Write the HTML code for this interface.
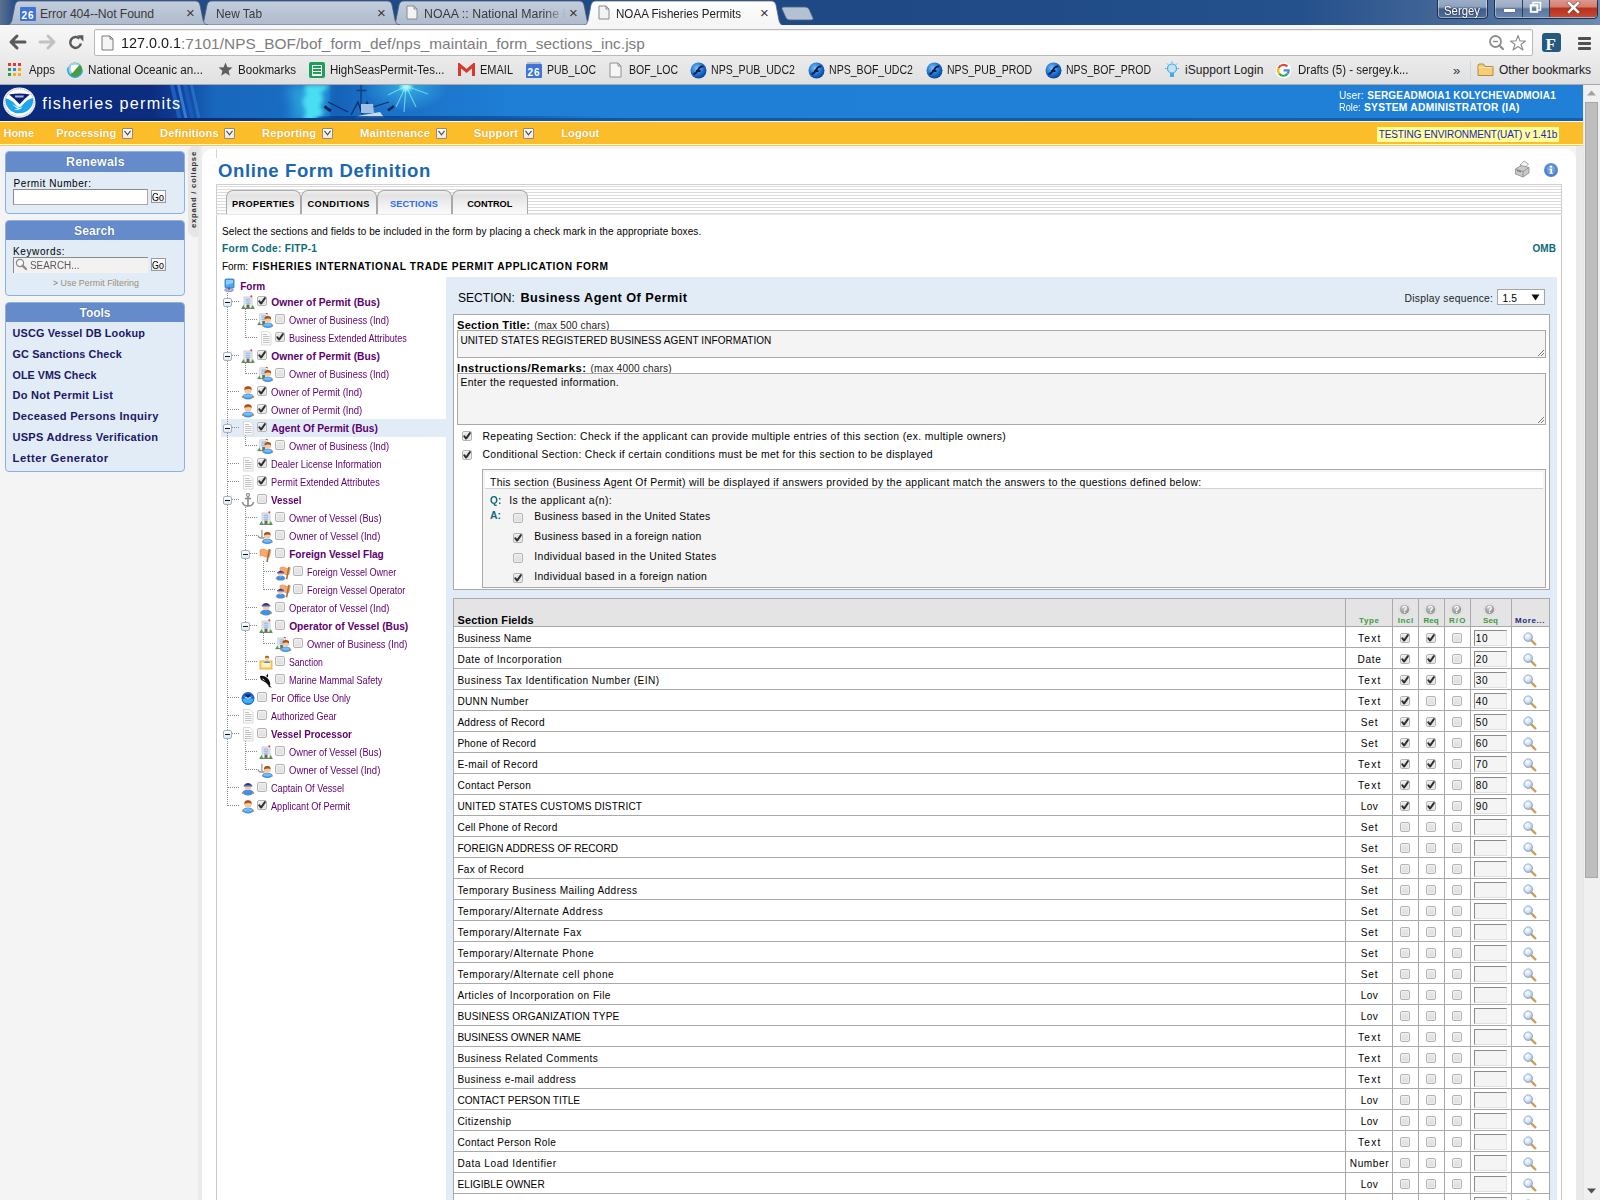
<!DOCTYPE html><html><head><meta charset='utf-8'><style>
html,body{margin:0;padding:0;width:1600px;height:1200px;overflow:hidden;position:relative;background:#f4f4f4;font-family:'Liberation Sans',sans-serif;}
body>div,body>svg{position:absolute;}
</style></head><body><div style="left:0;top:0;width:1600px;height:26px;background:linear-gradient(90deg,#5b718f 0px,#2a5088 14px,#1f4a86 300px,#1e4984 900px,#24508c 1300px,#4a6c9a 1480px,#6d8ab0 1600px);"></div>
<svg style="left:0;top:0" width="1600" height="26" viewBox="0 0 1600 26"><defs><linearGradient id="tg" x1="0" y1="0" x2="0" y2="1"><stop offset="0" stop-color="#c3cedc"/><stop offset="1" stop-color="#aebbcd"/></linearGradient><linearGradient id="ta" x1="0" y1="0" x2="0" y2="1"><stop offset="0" stop-color="#ffffff"/><stop offset="1" stop-color="#f4f4f4"/></linearGradient></defs><path d="M391,25 C394,25 395,23 396,20 L399,5 C400,2 401,1 404,1 L579,1 C582,1 583,2 584,5 L587,20 C588,23 589,25 592,25 Z" fill="url(#tg)" stroke="#4c6182" stroke-width="0.8"/><path d="M199,25 C202,25 203,23 204,20 L207,5 C208,2 209,1 212,1 L387,1 C390,1 391,2 392,5 L395,20 C396,23 397,25 400,25 Z" fill="url(#tg)" stroke="#4c6182" stroke-width="0.8"/><path d="M7,25 C10,25 11,23 12,20 L15,5 C16,2 17,1 20,1 L195,1 C198,1 199,2 200,5 L203,20 C204,23 205,25 208,25 Z" fill="url(#tg)" stroke="#4c6182" stroke-width="0.8"/><path d="M583,25.6 C586,25.6 587,23.6 588,20.6 L591,5 C592,2 593,1 596,1 L771,1 C774,1 775,2 776,5 L779,20.6 C780,23.6 781,25.6 784,25.6 Z" fill="url(#ta)" stroke="none"/><path d="M583,25.6 C586,25.6 587,23.6 588,20.6 L591,5 C592,2 593,1 596,1 L771,1 C774,1 775,2 776,5 L779,20.6 C780,23.6 781,25.6 784,25.6" fill="none" stroke="#5a6d88" stroke-width="0.8"/><path d="M784,7 L805,7 C807,7 808,8 809,9 L813,18 C813.5,19 813,20 811,20 L790,20 C788,20 787,19 786,18 L782,9 C781.5,8 782,7 784,7 Z" fill="#b4c1d2" stroke="#4c6182" stroke-width="0.8"/></svg>
<div style="left:1437px;top:-3px;width:49px;height:20px;border:1px solid #1d2f4a;border-radius:4px;background:linear-gradient(#9fb0c8 0%,#8ea2bf 45%,#3f5e8c 55%,#4d6b97 100%);box-shadow:inset 0 0 0 1px rgba(255,255,255,.45);"></div>
<div style="left:1444.00px;top:4.84px;font-size:12.00px;line-height:12.00px;font-weight:400;color:#ffffff;font-family:'Liberation Sans',sans-serif;white-space:pre;transform:scaleX(0.9467);transform-origin:0 0;text-shadow:0 0 2px #223;">Sergey</div>
<div style="left:1494px;top:-3px;width:102px;height:20px;border:1px solid #1d2f4a;border-radius:4px;overflow:hidden;box-shadow:inset 0 0 0 1px rgba(255,255,255,.4);background:linear-gradient(#aebcd0 0%,#9aaac2 45%,#5a789f 55%,#6a87ad 100%);"></div>
<div style="left:1522px;top:-2px;width:1px;height:19px;background:#2c3e58;"></div>
<div style="left:1549px;top:-2px;width:47px;height:19px;border-left:1px solid #2c3e58;border-radius:0 3px 3px 0;background:linear-gradient(#e0a097 0%,#d47f72 45%,#b8321e 55%,#c9482e 100%);"></div>
<div style="left:1504px;top:9px;width:11px;height:3px;background:#fff;box-shadow:0 0 1px #223;"></div>
<svg style="left:1529px;top:1px" width="13" height="13" viewBox="0 0 13 13"><path d="M4,4 L4,1.5 L11.5,1.5 L11.5,9 L9,9" stroke="#ffffff" stroke-width="1.5" fill="none"/><rect x="1.8" y="4.3" width="6.5" height="6.5" stroke="#ffffff" stroke-width="2" fill="none"/></svg>
<svg style="left:1566px;top:1px" width="15" height="13" viewBox="0 0 15 13"><path d="M3,2 L12,11 M12,2 L3,11" stroke="#5a1a10" stroke-width="4" stroke-linecap="square" opacity=".5"/><path d="M3,2 L12,11 M12,2 L3,11" stroke="#ffffff" stroke-width="2.6" stroke-linecap="square"/></svg>
<div style="left:20px;top:7px;width:16px;height:14px;background:#3f73d6;border-radius:1px;"></div>
<div style="left:20px;top:5px;width:16px;height:2px;background:#b9c4d4;"></div>
<div style="left:21.50px;top:11.14px;font-size:10.00px;line-height:10.00px;font-weight:700;color:#ffffff;font-family:'Liberation Sans',sans-serif;white-space:pre;letter-spacing:0.883px;">26</div>
<div style="left:40.00px;top:8.17px;font-size:12.20px;line-height:12.20px;font-weight:400;color:#3a3a3a;font-family:'Liberation Sans',sans-serif;white-space:pre;letter-spacing:-0.097px;">Error 404--Not Found</div>
<div style="left:186.00px;top:5.30px;font-size:15.00px;line-height:15.00px;font-weight:400;color:#3b3b3b;font-family:'Liberation Sans',sans-serif;white-space:pre;">×</div>
<div style="left:216.00px;top:8.17px;font-size:12.20px;line-height:12.20px;font-weight:400;color:#3a3a3a;font-family:'Liberation Sans',sans-serif;white-space:pre;transform:scaleX(0.9745);transform-origin:0 0;">New Tab</div>
<div style="left:377.00px;top:5.30px;font-size:15.00px;line-height:15.00px;font-weight:400;color:#3b3b3b;font-family:'Liberation Sans',sans-serif;white-space:pre;">×</div>
<svg style="left:406px;top:5px" width="13" height="16"><path d="M1,1 L8,1 L11,4 L11,14 L1,14 Z" fill="#f3f3f3" stroke="#8a8a8a" stroke-width="1"/><path d="M8,1 L8,4 L11,4" fill="none" stroke="#8a8a8a" stroke-width="1"/></svg>
<div style="left:424px;top:3px;width:142px;height:20px;overflow:hidden;-webkit-mask-image:linear-gradient(90deg,#000 85%,transparent 100%);mask-image:linear-gradient(90deg,#000 85%,transparent 100%);"><span style="position:absolute;left:0;top:3.5px;font-size:12.3px;color:#3a3a3a;white-space:pre;letter-spacing:0.05px;">NOAA :: National Marine Fisheries</span></div>
<div style="left:569.00px;top:5.30px;font-size:15.00px;line-height:15.00px;font-weight:400;color:#3b3b3b;font-family:'Liberation Sans',sans-serif;white-space:pre;">×</div>
<svg style="left:598px;top:5px" width="13" height="16"><path d="M1,1 L8,1 L11,4 L11,14 L1,14 Z" fill="#f3f3f3" stroke="#8a8a8a" stroke-width="1"/><path d="M8,1 L8,4 L11,4" fill="none" stroke="#8a8a8a" stroke-width="1"/></svg>
<div style="left:616.00px;top:8.17px;font-size:12.20px;line-height:12.20px;font-weight:400;color:#222222;font-family:'Liberation Sans',sans-serif;white-space:pre;transform:scaleX(0.9514);transform-origin:0 0;">NOAA Fisheries Permits</div>
<div style="left:760.00px;top:5.30px;font-size:15.00px;line-height:15.00px;font-weight:400;color:#3b3b3b;font-family:'Liberation Sans',sans-serif;white-space:pre;">×</div>
<div style="left:0;top:25px;width:1600px;height:60px;background:linear-gradient(#f7f7f7 0px,#f1f1f1 20px,#ebebeb 33px,#e6e6e6 45px,#e0e0e0 59px);"></div>
<div style="left:0;top:84px;width:1600px;height:1px;background:#a9a9a9;"></div>
<svg style="left:8px;top:33px" width="80" height="18" viewBox="0 0 80 18"><path d="M3,9 L17,9 M9,3 L3,9 L9,15" stroke="#5a5a5a" stroke-width="3" fill="none" stroke-linecap="round" stroke-linejoin="round"/><path d="M32,9 L46,9 M40,3 L46,9 L40,15" stroke="#c2c2c2" stroke-width="3" fill="none" stroke-linecap="round" stroke-linejoin="round"/><path d="M71.4,5.6 A5.4,5.4 0 1 0 72.9,10.6" stroke="#5a5a5a" stroke-width="2.5" fill="none"/><path d="M69.2,2.3 L75.4,2.3 L75.4,8.5 Z" fill="#5a5a5a"/></svg>
<div style="left:94px;top:29px;width:1437px;height:25px;background:#fff;border:1px solid #b9b9b9;border-radius:2px;box-shadow:inset 0 1px 1px rgba(0,0,0,.06);"></div>
<svg style="left:101px;top:35px" width="14" height="17"><path d="M1,1 L9,1 L12,4 L12,15 L1,15 Z" fill="#f5f5f5" stroke="#7a7a7a" stroke-width="1"/><path d="M9,1 L9,4 L12,4" fill="none" stroke="#7a7a7a" stroke-width="1"/></svg>
<div style="left:121.00px;top:36.24px;font-size:14.84px;line-height:14.84px;font-weight:400;color:#1a1a1a;font-family:'Liberation Sans',sans-serif;white-space:pre;transform:scaleX(0.9698);transform-origin:0 0;">127.0.0.1</div>
<div style="left:181.00px;top:35.78px;font-size:15.38px;line-height:15.38px;font-weight:400;color:#7d7d7d;font-family:'Liberation Sans',sans-serif;white-space:pre;letter-spacing:0.040px;">:7101/NPS_BOF/bof_form_def/nps_maintain_form_sections_inc.jsp</div>
<svg style="left:1488px;top:34px" width="40" height="18" viewBox="0 0 40 18"><circle cx="7.5" cy="7.5" r="5.5" stroke="#8d8d8d" stroke-width="1.8" fill="none"/><path d="M5,7.5 L10,7.5" stroke="#8d8d8d" stroke-width="1.4"/><path d="M11.5,11.5 L15,15" stroke="#8d8d8d" stroke-width="2.2" stroke-linecap="round"/><path d="M30,1.5 L32,7 L37.5,7 L33,10.5 L35,16 L30,12.5 L25,16 L27,10.5 L22.5,7 L28,7 Z" stroke="#8d8d8d" stroke-width="1.1" fill="#fff" stroke-linejoin="round"/></svg>
<div style="left:1542px;top:33px;width:19px;height:19px;background:#245a80;border-radius:3px;"></div>
<div style="left:1545.50px;top:36.11px;font-size:17.00px;line-height:17.00px;font-weight:700;color:#ffffff;font-family:'Liberation Serif',sans-serif;white-space:pre;">F</div>
<div style="left:1578px;top:37px;width:13px;height:3px;background:#505050;border-radius:1px;"></div>
<div style="left:1578px;top:42px;width:13px;height:3px;background:#505050;border-radius:1px;"></div>
<div style="left:1578px;top:47px;width:13px;height:3px;background:#505050;border-radius:1px;"></div>
<div style="left:8px;top:63px;width:3px;height:3px;background:#e8352f;"></div>
<div style="left:13px;top:63px;width:3px;height:3px;background:#e8352f;"></div>
<div style="left:18px;top:63px;width:3px;height:3px;background:#e8352f;"></div>
<div style="left:8px;top:68px;width:3px;height:3px;background:#2c9d48;"></div>
<div style="left:13px;top:68px;width:3px;height:3px;background:#2f86e6;"></div>
<div style="left:18px;top:68px;width:3px;height:3px;background:#f2a013;"></div>
<div style="left:8px;top:73px;width:3px;height:3px;background:#2c9d48;"></div>
<div style="left:13px;top:73px;width:3px;height:3px;background:#f9b10f;"></div>
<div style="left:18px;top:73px;width:3px;height:3px;background:#f9b10f;"></div>
<div style="left:28.50px;top:64.44px;font-size:12.00px;line-height:12.00px;font-weight:400;color:#1a1a1a;font-family:'Liberation Sans',sans-serif;white-space:pre;transform:scaleX(0.9503);transform-origin:0 0;">Apps</div>
<svg style="left:66px;top:61px" width="18" height="18" viewBox="0 0 18 18"><circle cx="9" cy="9" r="7.5" fill="#4c9b3a"/><path d="M9,1.5 A7.5,7.5 0 0 0 3.6,14.2 L14,3.8 A7.5,7.5 0 0 0 9,1.5 Z" fill="#9fd0ec"/><circle cx="9" cy="9" r="7.2" fill="none" stroke="#2aa3df" stroke-width="1.4" stroke-dasharray="25 30"/><path d="M5,4.5 Q9,3 12.5,4.5 L6.5,12 Q4,9 5,4.5Z" fill="#ffffff"/></svg>
<div style="left:88.00px;top:64.44px;font-size:12.00px;line-height:12.00px;font-weight:400;color:#1a1a1a;font-family:'Liberation Sans',sans-serif;white-space:pre;transform:scaleX(0.9739);transform-origin:0 0;">National Oceanic an...</div>
<svg style="left:218px;top:62px" width="15" height="15" viewBox="0 0 15 15"><path d="M7.5,0.5 L9.4,5.2 L14.5,5.5 L10.6,8.8 L11.8,13.8 L7.5,11 L3.2,13.8 L4.4,8.8 L0.5,5.5 L5.6,5.2 Z" fill="#5f5f5f"/></svg>
<div style="left:238.00px;top:64.44px;font-size:12.00px;line-height:12.00px;font-weight:400;color:#1a1a1a;font-family:'Liberation Sans',sans-serif;white-space:pre;transform:scaleX(0.9662);transform-origin:0 0;">Bookmarks</div>
<div style="left:309px;top:62px;width:16px;height:16px;background:#1e9f57;border-radius:2px;"></div>
<div style="left:312px;top:65px;width:8px;height:9px;border:1px solid #fff;background:repeating-linear-gradient(#1e9f57 0 2px,#fff 2px 3px);"></div>
<div style="left:330.00px;top:64.44px;font-size:12.00px;line-height:12.00px;font-weight:400;color:#1a1a1a;font-family:'Liberation Sans',sans-serif;white-space:pre;transform:scaleX(0.9592);transform-origin:0 0;">HighSeasPermit-Tes...</div>
<svg style="left:458px;top:63px" width="17" height="14" viewBox="0 0 17 14"><path d="M1.5,13 L1.5,2 L8.5,8 L15.5,2 L15.5,13" stroke="#d9392b" stroke-width="3" fill="none" stroke-linejoin="miter"/></svg>
<div style="left:480.00px;top:64.44px;font-size:12.00px;line-height:12.00px;font-weight:400;color:#1a1a1a;font-family:'Liberation Sans',sans-serif;white-space:pre;transform:scaleX(0.9163);transform-origin:0 0;">EMAIL</div>
<div style="left:526px;top:64px;width:16px;height:14px;background:#3f73d6;border-radius:1px;"></div>
<div style="left:527px;top:62px;width:14px;height:2px;background:#b6bfcc;"></div>
<div style="left:527.50px;top:68.13px;font-size:10.00px;line-height:10.00px;font-weight:700;color:#ffffff;font-family:'Liberation Sans',sans-serif;white-space:pre;letter-spacing:0.883px;">26</div>
<div style="left:547.00px;top:64.44px;font-size:12.00px;line-height:12.00px;font-weight:400;color:#1a1a1a;font-family:'Liberation Sans',sans-serif;white-space:pre;transform:scaleX(0.8745);transform-origin:0 0;">PUB_LOC</div>
<svg style="left:609px;top:62px" width="14" height="17"><path d="M1,1 L9,1 L12,4 L12,15 L1,15 Z" fill="#f6f6f6" stroke="#909090" stroke-width="1"/><path d="M9,1 L9,4 L12,4" fill="none" stroke="#909090" stroke-width="1"/></svg>
<div style="left:629.00px;top:64.44px;font-size:12.00px;line-height:12.00px;font-weight:400;color:#1a1a1a;font-family:'Liberation Sans',sans-serif;white-space:pre;transform:scaleX(0.8748);transform-origin:0 0;">BOF_LOC</div>
<svg style="left:690px;top:62px" width="17" height="17" viewBox="0 0 17 17"><defs><radialGradient id="sg690" cx="0.4" cy="0.35" r="0.7"><stop offset="0" stop-color="#7ec3f4"/><stop offset="0.6" stop-color="#1b6fd0"/><stop offset="1" stop-color="#0b3c8c"/></radialGradient></defs><circle cx="8.5" cy="8.5" r="8" fill="url(#sg690)"/><path d="M3.5,12 Q6,12 8,8 Q10,4 13.5,4.5 M6,9 L10.5,9" stroke="#0a1f4a" stroke-width="1.8" fill="none"/></svg>
<div style="left:711.00px;top:64.44px;font-size:12.00px;line-height:12.00px;font-weight:400;color:#1a1a1a;font-family:'Liberation Sans',sans-serif;white-space:pre;transform:scaleX(0.8807);transform-origin:0 0;">NPS_PUB_UDC2</div>
<svg style="left:808px;top:62px" width="17" height="17" viewBox="0 0 17 17"><defs><radialGradient id="sg808" cx="0.4" cy="0.35" r="0.7"><stop offset="0" stop-color="#7ec3f4"/><stop offset="0.6" stop-color="#1b6fd0"/><stop offset="1" stop-color="#0b3c8c"/></radialGradient></defs><circle cx="8.5" cy="8.5" r="8" fill="url(#sg808)"/><path d="M3.5,12 Q6,12 8,8 Q10,4 13.5,4.5 M6,9 L10.5,9" stroke="#0a1f4a" stroke-width="1.8" fill="none"/></svg>
<div style="left:829.00px;top:64.44px;font-size:12.00px;line-height:12.00px;font-weight:400;color:#1a1a1a;font-family:'Liberation Sans',sans-serif;white-space:pre;transform:scaleX(0.8807);transform-origin:0 0;">NPS_BOF_UDC2</div>
<svg style="left:926px;top:62px" width="17" height="17" viewBox="0 0 17 17"><defs><radialGradient id="sg926" cx="0.4" cy="0.35" r="0.7"><stop offset="0" stop-color="#7ec3f4"/><stop offset="0.6" stop-color="#1b6fd0"/><stop offset="1" stop-color="#0b3c8c"/></radialGradient></defs><circle cx="8.5" cy="8.5" r="8" fill="url(#sg926)"/><path d="M3.5,12 Q6,12 8,8 Q10,4 13.5,4.5 M6,9 L10.5,9" stroke="#0a1f4a" stroke-width="1.8" fill="none"/></svg>
<div style="left:947.00px;top:64.44px;font-size:12.00px;line-height:12.00px;font-weight:400;color:#1a1a1a;font-family:'Liberation Sans',sans-serif;white-space:pre;transform:scaleX(0.8729);transform-origin:0 0;">NPS_PUB_PROD</div>
<svg style="left:1045px;top:62px" width="17" height="17" viewBox="0 0 17 17"><defs><radialGradient id="sg1045" cx="0.4" cy="0.35" r="0.7"><stop offset="0" stop-color="#7ec3f4"/><stop offset="0.6" stop-color="#1b6fd0"/><stop offset="1" stop-color="#0b3c8c"/></radialGradient></defs><circle cx="8.5" cy="8.5" r="8" fill="url(#sg1045)"/><path d="M3.5,12 Q6,12 8,8 Q10,4 13.5,4.5 M6,9 L10.5,9" stroke="#0a1f4a" stroke-width="1.8" fill="none"/></svg>
<div style="left:1066.00px;top:64.44px;font-size:12.00px;line-height:12.00px;font-weight:400;color:#1a1a1a;font-family:'Liberation Sans',sans-serif;white-space:pre;transform:scaleX(0.8731);transform-origin:0 0;">NPS_BOF_PROD</div>
<svg style="left:1163px;top:61px" width="18" height="18" viewBox="0 0 18 18"><circle cx="9" cy="7.5" r="4.5" fill="#bfe3f7" stroke="#4aa8df" stroke-width="1.2"/><rect x="7" y="12" width="4" height="4" fill="#4aa8df"/><path d="M9,0.5 L9,2 M2,7.5 L3.5,7.5 M14.5,7.5 L16,7.5 M3.8,2.5 L4.8,3.5 M14.2,2.5 L13.2,3.5" stroke="#4aa8df" stroke-width="1"/></svg>
<div style="left:1185.00px;top:64.44px;font-size:12.00px;line-height:12.00px;font-weight:400;color:#1a1a1a;font-family:'Liberation Sans',sans-serif;white-space:pre;letter-spacing:0.085px;">iSupport Login</div>
<svg style="left:1275px;top:62px" width="17" height="17" viewBox="0 0 17 17"><circle cx="8.5" cy="8.5" r="8" fill="#fff"/><path d="M13.5,7.3 L8.6,7.3 L8.6,9.6 L11.2,9.6 A3.1,3.1 0 1 1 10.4,5.8 L12.1,4.2 A5.4,5.4 0 1 0 13.6,8.5 Z" fill="none" stroke="#4285f4" stroke-width="0"/><path d="M12.3,4.6 A5.2,5.2 0 0 0 3.6,6.2" stroke="#ea4335" stroke-width="2.2" fill="none"/><path d="M3.6,6.2 A5.2,5.2 0 0 0 4.2,11.6" stroke="#fbbc05" stroke-width="2.2" fill="none"/><path d="M4.2,11.6 A5.2,5.2 0 0 0 12.6,11.6" stroke="#34a853" stroke-width="2.2" fill="none"/><path d="M12.6,11.6 A5.2,5.2 0 0 0 13.7,8.4 L8.6,8.4" stroke="#4285f4" stroke-width="2.2" fill="none"/></svg>
<div style="left:1297.50px;top:64.44px;font-size:12.00px;line-height:12.00px;font-weight:400;color:#1a1a1a;font-family:'Liberation Sans',sans-serif;white-space:pre;transform:scaleX(0.9597);transform-origin:0 0;">Drafts (5) - sergey.k...</div>
<div style="left:1453.00px;top:63.50px;font-size:13.00px;line-height:13.00px;font-weight:400;color:#333333;font-family:'Liberation Sans',sans-serif;white-space:pre;">»</div>
<div style="left:1470px;top:61px;width:1px;height:20px;background:#cfd6de;"></div>
<svg style="left:1477px;top:62px" width="17" height="15" viewBox="0 0 17 15"><path d="M1,3 L1,13.5 L16,13.5 L16,4.5 L8,4.5 L6.5,2 L2,2 Z" fill="#f6cd78" stroke="#b58a3a" stroke-width="1"/><path d="M1.5,5.5 L15.5,5.5" stroke="#fbe4ad" stroke-width="1"/></svg>
<div style="left:1499.00px;top:64.44px;font-size:12.00px;line-height:12.00px;font-weight:400;color:#1a1a1a;font-family:'Liberation Sans',sans-serif;white-space:pre;">Other bookmarks</div>
<div style="left:0;top:85px;width:1583px;height:1115px;background:#f4f4f4;"></div>
<div style="left:0;top:85px;width:1583px;height:36px;background:linear-gradient(90deg,#0a2a7c 0px,#0b2c7f 150px,#0e3a90 172px,#1455ab 195px,#1867bd 215px,#196cc2 290px,#1b74ca 420px,#1f7fd6 520px,#2080d8 1583px);"></div>
<svg style="left:150px;top:85px" width="80" height="36" viewBox="0 0 80 36"><path d="M20,0 L24,0 L32,36 L28,36 Z" fill="#1e62c4" opacity=".9"/><path d="M27,0 L30,0 L38,36 L35,36 Z" fill="#3a8ae6" opacity=".8"/><path d="M33,0 L37,0 L45,36 L41,36 Z" fill="#1b5cbe" opacity=".9"/><path d="M40,0 L43,0 L51,36 L48,36 Z" fill="#2f7fdc" opacity=".6"/></svg>
<div style="left:330px;top:85px;width:40px;height:33px;background:linear-gradient(90deg,rgba(16,80,170,.55),rgba(20,90,180,0));"></div>
<svg style="left:270px;top:85px" width="90" height="36" viewBox="0 0 90 36"><defs><filter id="cb" x="-30%" y="-30%" width="160%" height="160%"><feGaussianBlur stdDeviation="2.2"/></filter><filter id="cb2" x="-50%" y="-50%" width="200%" height="200%"><feGaussianBlur stdDeviation="6"/></filter></defs><path d="M20,0 L62,0 Q58,6 54,9 Q60,14 55,19 Q52,24 58,28 Q54,33 50,36 L18,36 Q26,26 22,18 Q16,10 20,0Z" fill="#38c8ee" opacity=".55" filter="url(#cb2)"/><path d="M36,0 L60,0 Q56,5 50,8 Q55,12 52,17 Q47,22 54,27 Q52,31 44,36 L32,36 Q38,28 34,21 Q30,15 37,9 Q32,5 36,0Z" fill="#4ee6f4" opacity=".9" filter="url(#cb)"/></svg>
<div style="left:360px;top:85px;width:100px;height:36px;background:radial-gradient(ellipse 8px 6px at 46px 2px,rgba(230,255,255,1),rgba(120,240,250,.85) 50%,rgba(60,190,240,0) 100%),radial-gradient(ellipse 42px 24px at 46px 2px,rgba(70,210,245,.6),rgba(40,140,220,0) 100%);"></div>
<svg style="left:370px;top:85px" width="80" height="36" viewBox="0 0 80 36"><g stroke="#9af6ff" stroke-width="1.2" opacity=".6"><path d="M36,1 L26,22"/><path d="M36,1 L34,27"/><path d="M36,1 L46,22"/><path d="M36,1 L18,10"/><path d="M36,1 L58,9"/></g></svg>
<svg style="left:318px;top:85px" width="82" height="36" viewBox="0 0 82 36"><path d="M43,0 L43,26 M38.5,5.5 L48.5,5.5" stroke="#123f80" stroke-width="1.5"/><path d="M10,17 L30,27 M52,23 L71,17 M33,30 L40,17 L44,29 M44,29 L49,17 L55,28" stroke="#0b2f68" stroke-width="1.3" fill="none"/><path d="M6.5,21.5 L13,26 M70,25.5 L76,21" stroke="#082450" stroke-width="2.8"/><path d="M43,19 L55,19 L56,28 L43,28 Z" fill="#9fc0e4"/><path d="M33,35 L68,35 L62,27 Q50,29 40,31 Z" fill="#c9ddf2"/><path d="M0,32.5 L82,32.5 L82,35 L0,35 Z" fill="#0f4f9c" opacity=".85"/></svg>
<div style="left:312px;top:116px;width:300px;height:3px;background:linear-gradient(90deg,rgba(10,60,140,0),rgba(10,60,140,.8) 8%,rgba(12,70,150,.7) 60%,rgba(15,90,170,0));"></div>
<div style="left:0;top:118px;width:1583px;height:3px;background:linear-gradient(90deg,#0a2a70 0px,#0a2a70 180px,#0d4f9e 400px,#0f5aa8 700px,#1060b0 1583px);"></div>
<div style="left:0;top:121px;width:1583px;height:1px;background:#fff8e0;"></div>
<div style="left:0;top:122px;width:1583px;height:22px;background:#fbbd2a;"></div>
<div style="left:0;top:144px;width:1583px;height:1px;background:#fffbe8;"></div>
<div style="left:0;top:145px;width:1583px;height:1px;background:#fbc94a;"></div>
<svg style="left:2px;top:87px" width="36" height="33" viewBox="0 0 36 33"><ellipse cx="17.3" cy="15.6" rx="16.2" ry="15.2" fill="#f6f4f8"/><ellipse cx="17.3" cy="15.6" rx="14.7" ry="13.8" fill="none" stroke="#c9bccb" stroke-width="1.1" stroke-dasharray="1.2 0.9"/><ellipse cx="17.3" cy="15.6" rx="13.8" ry="12.9" fill="#ffffff"/><path d="M3.6,11.2 Q10,12.5 15.2,19.6 Q17.2,20.6 19.2,19.4 Q24.5,12.5 31,11 A13.9,13 0 1 1 3.6,11.2 Z" fill="#1ba6ee"/><path d="M7,7.6 Q17.3,5.4 27.8,7.4 Q22.5,11.5 17.6,17.2 Q12.2,11.5 7,7.6 Z" fill="#0b1f78"/><path d="M12.8,8.6 L21.8,8.6 L21.3,10.4 L13.3,10.4 Z" fill="#d0d0ea" opacity=".85"/><path d="M10,17 Q14,21 16,21.5 L12,22.5 Q14,23.3 18,22.3 L20.5,20.2 Q18,21 16.5,20.5 Z" fill="#ffffff" opacity=".9"/></svg>
<div style="left:42.20px;top:94.89px;font-size:16.20px;line-height:16.20px;font-weight:400;color:#ffffff;font-family:'Liberation Sans',sans-serif;white-space:pre;letter-spacing:1.260px;">fisheries permits</div>
<div style="left:3.50px;top:128.30px;font-size:10.99px;line-height:10.99px;font-weight:700;color:#ffffff;font-family:'Liberation Sans',sans-serif;white-space:pre;letter-spacing:-0.010px;text-shadow:0 0 1px rgba(160,100,0,.6);">Home</div>
<div style="left:56.25px;top:128.23px;font-size:11.06px;line-height:11.06px;font-weight:700;color:#ffffff;font-family:'Liberation Sans',sans-serif;white-space:pre;letter-spacing:0.038px;text-shadow:0 0 1px rgba(160,100,0,.6);">Processing</div>
<div style="left:121.5px;top:128px;width:9px;height:9px;border:1px solid #9a8a6a;background:linear-gradient(#ffffff,#e8e8e8);border-radius:1px;"></div>
<svg style="left:123.5px;top:130px" width="8" height="6" viewBox="0 0 8 6"><path d="M0.5,0.8 L3.5,4.8 L6.5,0.8" stroke="#505050" stroke-width="1.2" fill="none"/></svg>
<div style="left:160.00px;top:128.14px;font-size:11.18px;line-height:11.18px;font-weight:700;color:#ffffff;font-family:'Liberation Sans',sans-serif;white-space:pre;letter-spacing:0.094px;text-shadow:0 0 1px rgba(160,100,0,.6);">Definitions</div>
<div style="left:223.5px;top:128px;width:9px;height:9px;border:1px solid #9a8a6a;background:linear-gradient(#ffffff,#e8e8e8);border-radius:1px;"></div>
<svg style="left:225.5px;top:130px" width="8" height="6" viewBox="0 0 8 6"><path d="M0.5,0.8 L3.5,4.8 L6.5,0.8" stroke="#505050" stroke-width="1.2" fill="none"/></svg>
<div style="left:262.00px;top:128.09px;font-size:11.24px;line-height:11.24px;font-weight:700;color:#ffffff;font-family:'Liberation Sans',sans-serif;white-space:pre;letter-spacing:0.142px;text-shadow:0 0 1px rgba(160,100,0,.6);">Reporting</div>
<div style="left:321.5px;top:128px;width:9px;height:9px;border:1px solid #9a8a6a;background:linear-gradient(#ffffff,#e8e8e8);border-radius:1px;"></div>
<svg style="left:323.5px;top:130px" width="8" height="6" viewBox="0 0 8 6"><path d="M0.5,0.8 L3.5,4.8 L6.5,0.8" stroke="#505050" stroke-width="1.2" fill="none"/></svg>
<div style="left:360.00px;top:128.06px;font-size:11.27px;line-height:11.27px;font-weight:700;color:#ffffff;font-family:'Liberation Sans',sans-serif;white-space:pre;letter-spacing:0.170px;text-shadow:0 0 1px rgba(160,100,0,.6);">Maintenance</div>
<div style="left:435.5px;top:128px;width:9px;height:9px;border:1px solid #9a8a6a;background:linear-gradient(#ffffff,#e8e8e8);border-radius:1px;"></div>
<svg style="left:437.5px;top:130px" width="8" height="6" viewBox="0 0 8 6"><path d="M0.5,0.8 L3.5,4.8 L6.5,0.8" stroke="#505050" stroke-width="1.2" fill="none"/></svg>
<div style="left:473.75px;top:128.06px;font-size:11.27px;line-height:11.27px;font-weight:700;color:#ffffff;font-family:'Liberation Sans',sans-serif;white-space:pre;letter-spacing:0.180px;text-shadow:0 0 1px rgba(160,100,0,.6);">Support</div>
<div style="left:522.5px;top:128px;width:9px;height:9px;border:1px solid #9a8a6a;background:linear-gradient(#ffffff,#e8e8e8);border-radius:1px;"></div>
<svg style="left:524.5px;top:130px" width="8" height="6" viewBox="0 0 8 6"><path d="M0.5,0.8 L3.5,4.8 L6.5,0.8" stroke="#505050" stroke-width="1.2" fill="none"/></svg>
<div style="left:561.25px;top:128.20px;font-size:11.11px;line-height:11.11px;font-weight:700;color:#ffffff;font-family:'Liberation Sans',sans-serif;white-space:pre;letter-spacing:0.074px;text-shadow:0 0 1px rgba(160,100,0,.6);">Logout</div>
<div style="left:1339.00px;top:91.42px;font-size:10.02px;line-height:10.02px;font-weight:400;color:#ffffff;font-family:'Liberation Sans',sans-serif;white-space:pre;letter-spacing:0.136px;">User:</div>
<div style="left:1367.30px;top:91.42px;font-size:10.02px;line-height:10.02px;font-weight:700;color:#ffffff;font-family:'Liberation Sans',sans-serif;white-space:pre;letter-spacing:0.156px;">SERGEADMOIA1 KOLYCHEVADMOIA1</div>
<div style="left:1339.00px;top:102.84px;font-size:10.00px;line-height:10.00px;font-weight:400;color:#ffffff;font-family:'Liberation Sans',sans-serif;white-space:pre;transform:scaleX(0.9254);transform-origin:0 0;">Role:</div>
<div style="left:1364.00px;top:102.65px;font-size:10.22px;line-height:10.22px;font-weight:700;color:#ffffff;font-family:'Liberation Sans',sans-serif;white-space:pre;letter-spacing:0.267px;">SYSTEM ADMINISTRATOR (IA)</div>
<div style="left:1377px;top:127px;width:182px;height:15px;background:#ffff9c;"></div>
<div style="left:1378.70px;top:129.94px;font-size:10.00px;line-height:10.00px;font-weight:400;color:#2323b8;font-family:'Liberation Sans',sans-serif;white-space:pre;letter-spacing:-0.095px;">TESTING ENVIRONMENT(UAT) v 1.41b</div>
<div style="left:1583px;top:85px;width:17px;height:1115px;background:#f0f0f0;border-left:1px solid #e6e6e6;box-sizing:border-box;"></div>
<svg style="left:1586px;top:89px" width="11" height="8" viewBox="0 0 11 8"><path d="M1,6.5 L5.5,1.5 L10,6.5 Z" fill="#a3a3a3"/></svg>
<div style="left:1585px;top:102px;width:13px;height:776px;background:#bebebe;border:1px solid #a8a8a8;box-sizing:border-box;"></div>
<svg style="left:1586px;top:1187px" width="11" height="8" viewBox="0 0 11 8"><path d="M1,1.5 L5.5,6.5 L10,1.5 Z" fill="#505050"/></svg>
<div style="left:5px;top:151px;width:180px;height:62.5px;box-sizing:border-box;border:1px solid #8cb0e4;border-radius:4px;background:#e1ecf7;overflow:hidden;"><div style="position:absolute;left:0;top:0;width:178px;height:19.5px;background:#658bcb;"></div></div>
<div style="left:66.05px;top:156.46px;font-size:12.34px;line-height:12.34px;font-weight:700;color:#ffffff;font-family:'Liberation Sans',sans-serif;white-space:pre;letter-spacing:0.227px;text-shadow:0 0 1px #2a4a8a;">Renewals</div>
<div style="left:13.50px;top:179.13px;font-size:10.00px;line-height:10.00px;font-weight:400;color:#000000;font-family:'Liberation Sans',sans-serif;white-space:pre;letter-spacing:0.576px;">Permit Number:</div>
<div style="left:13px;top:189px;width:135px;height:16px;box-sizing:border-box;background:#fff;border:1px solid #a8a8a8;border-top-color:#8a8a8a;border-left-color:#8a8a8a;"></div>
<div style="left:151px;top:190px;width:15px;height:13px;box-sizing:border-box;background:linear-gradient(#ffffff,#ececec);border:1px solid #9a9a9a;"></div>
<div style="left:152.30px;top:192.84px;font-size:10.00px;line-height:10.00px;font-weight:400;color:#000000;font-family:'Liberation Sans',sans-serif;white-space:pre;transform:scaleX(0.8993);transform-origin:0 0;">Go</div>
<div style="left:5px;top:219.5px;width:180px;height:76.5px;box-sizing:border-box;border:1px solid #8cb0e4;border-radius:4px;background:#e1ecf7;overflow:hidden;"><div style="position:absolute;left:0;top:0;width:178px;height:19px;background:#658bcb;"></div></div>
<div style="left:74.05px;top:224.88px;font-size:12.07px;line-height:12.07px;font-weight:700;color:#ffffff;font-family:'Liberation Sans',sans-serif;white-space:pre;letter-spacing:0.047px;text-shadow:0 0 1px #2a4a8a;">Search</div>
<div style="left:13.00px;top:247.44px;font-size:10.00px;line-height:10.00px;font-weight:400;color:#000000;font-family:'Liberation Sans',sans-serif;white-space:pre;letter-spacing:0.614px;">Keywords:</div>
<div style="left:13px;top:257px;width:135px;height:16px;box-sizing:border-box;background:#f2f2f2;border-top:1px solid #8a8a8a;border-left:1px solid #8a8a8a;"></div>
<svg style="left:15px;top:258px" width="13" height="13" viewBox="0 0 13 13"><circle cx="5" cy="5" r="3.6" fill="#f8f8f8" stroke="#8a8a8a" stroke-width="1.2"/><path d="M7.6,7.6 L11,11" stroke="#8a8a8a" stroke-width="2.2" stroke-linecap="round"/></svg>
<div style="left:29.50px;top:260.97px;font-size:10.19px;line-height:10.19px;font-weight:400;color:#5a5a5a;font-family:'Liberation Sans',sans-serif;white-space:pre;transform:scaleX(0.9709);transform-origin:0 0;">SEARCH...</div>
<div style="left:151px;top:258px;width:15px;height:13px;box-sizing:border-box;background:linear-gradient(#ffffff,#ececec);border:1px solid #9a9a9a;"></div>
<div style="left:152.30px;top:260.84px;font-size:10.00px;line-height:10.00px;font-weight:400;color:#000000;font-family:'Liberation Sans',sans-serif;white-space:pre;transform:scaleX(0.8993);transform-origin:0 0;">Go</div>
<div style="left:53.00px;top:279.20px;font-size:8.50px;line-height:8.50px;font-weight:400;color:#7a7a7a;font-family:'Liberation Sans',sans-serif;white-space:pre;">&gt;</div>
<div style="left:60.50px;top:278.89px;font-size:8.87px;line-height:8.87px;font-weight:400;color:#9c8f74;font-family:'Liberation Sans',sans-serif;white-space:pre;letter-spacing:0.033px;">Use Permit Filtering</div>
<div style="left:5px;top:301.5px;width:180px;height:170.0px;box-sizing:border-box;border:1px solid #8cb0e4;border-radius:4px;background:#e1ecf7;overflow:hidden;"><div style="position:absolute;left:0;top:0;width:178px;height:19.5px;background:#658bcb;"></div></div>
<div style="left:79.50px;top:306.86px;font-size:11.98px;line-height:11.98px;font-weight:700;color:#ffffff;font-family:'Liberation Sans',sans-serif;white-space:pre;letter-spacing:-0.014px;text-shadow:0 0 1px #2a4a8a;">Tools</div>
<div style="left:12.50px;top:327.70px;font-size:10.86px;line-height:10.86px;font-weight:700;color:#1c1866;font-family:'Liberation Sans',sans-serif;white-space:pre;letter-spacing:0.160px;">USCG Vessel DB Lookup</div>
<div style="left:12.50px;top:348.59px;font-size:10.85px;line-height:10.85px;font-weight:700;color:#1c1866;font-family:'Liberation Sans',sans-serif;white-space:pre;letter-spacing:0.149px;">GC Sanctions Check</div>
<div style="left:12.50px;top:369.61px;font-size:10.69px;line-height:10.69px;font-weight:700;color:#1c1866;font-family:'Liberation Sans',sans-serif;white-space:pre;letter-spacing:0.062px;">OLE VMS Check</div>
<div style="left:12.50px;top:390.19px;font-size:11.05px;line-height:11.05px;font-weight:700;color:#1c1866;font-family:'Liberation Sans',sans-serif;white-space:pre;letter-spacing:0.240px;">Do Not Permit List</div>
<div style="left:12.50px;top:411.00px;font-size:11.12px;line-height:11.12px;font-weight:700;color:#1c1866;font-family:'Liberation Sans',sans-serif;white-space:pre;letter-spacing:0.299px;">Deceased Persons Inquiry</div>
<div style="left:12.50px;top:431.95px;font-size:11.05px;line-height:11.05px;font-weight:700;color:#1c1866;font-family:'Liberation Sans',sans-serif;white-space:pre;letter-spacing:0.246px;">USPS Address Verification</div>
<div style="left:12.50px;top:452.67px;font-size:11.24px;line-height:11.24px;font-weight:700;color:#1c1866;font-family:'Liberation Sans',sans-serif;white-space:pre;letter-spacing:0.514px;">Letter Generator</div>
<div style="left:198px;top:146px;width:4px;height:1054px;background:#ebebeb;"></div>
<svg style="left:188px;top:146px" width="11" height="91" viewBox="0 0 11 91"><path d="M0,4 L4,0 L11,0 L11,91 L5,91 L0,86 Z" fill="#e6e6e6"/></svg>
<div style="left:188px;top:228px;width:77px;height:11px;transform-origin:0 0;transform:rotate(-90deg);font-size:7.6px;font-weight:700;line-height:11px;color:#333333;white-space:pre;letter-spacing:0.8px;">expand / collapse</div>
<div style="left:1576px;top:146px;width:7px;height:1054px;background:#e9e9e9;"></div>
<div style="left:202px;top:149px;width:1374px;height:1100px;background:#ffffff;border-radius:11px 11px 0 0;"></div>
<div style="left:216px;top:149px;width:1px;height:9px;background:#d4d4d4;"></div>
<div style="left:216px;top:184px;width:1px;height:1016px;background:#c9c9c9;"></div>
<div style="left:1561px;top:184px;width:1px;height:1016px;background:#c9c9c9;"></div>
<div style="left:218.00px;top:161.90px;font-size:18.55px;line-height:18.55px;font-weight:700;color:#1a67b4;font-family:'Liberation Sans',sans-serif;white-space:pre;letter-spacing:0.599px;">Online Form Definition</div>
<svg style="left:1514px;top:160px" width="18" height="18" viewBox="0 0 18 18"><path d="M6,5 L10,1 L14.5,4 L10.5,8 Z" fill="#f4f4f4" stroke="#9a9a9a" stroke-width="0.8"/><path d="M1.5,9 L7,5.5 L15,7.5 L15,13 L9,17 L1.5,14 Z" fill="#c9c9c9" stroke="#8c8c8c" stroke-width="0.8"/><path d="M1.5,9 L9,11.5 L15,7.5" fill="none" stroke="#8c8c8c" stroke-width="0.8"/><path d="M9,11.5 L9,17" stroke="#8c8c8c" stroke-width="0.8"/><path d="M3,10.5 L7,11.8" stroke="#6a6a6a" stroke-width="1"/></svg>
<svg style="left:1542.5px;top:162px" width="16" height="16" viewBox="0 0 16 16"><defs><radialGradient id="ig" cx=".5" cy=".4" r=".6"><stop offset="0" stop-color="#8fb6e8"/><stop offset="1" stop-color="#4a7fcf"/></radialGradient></defs><circle cx="8" cy="8" r="7" fill="url(#ig)"/><circle cx="8" cy="8" r="5.2" fill="none" stroke="#3a68b0" stroke-width="0.8" opacity=".7"/><circle cx="8" cy="4.6" r="1.2" fill="#fff"/><path d="M6.6,6.8 L9,6.8 L9,10.8 L10,10.8 L10,11.8 L6.4,11.8 L6.4,10.8 L7.4,10.8 L7.4,7.8 L6.6,7.8 Z" fill="#fff"/></svg>
<div style="left:216px;top:184px;width:1346px;height:31px;box-sizing:border-box;border:1px solid #cfcfcf;border-bottom:none;background:repeating-linear-gradient(#ffffff 0px,#ffffff 1px,#dcdcdc 1px,#dcdcdc 2px,#ffffff 2px,#ffffff 3px);"></div>
<div style="left:226px;top:190px;width:74.5px;height:25px;box-sizing:border-box;border:1px solid #a9a9a9;border-bottom:none;border-radius:7px 7px 0 0;background:linear-gradient(#f2f2f2 0px,#e2e2e2 4px,#f0f0f0 14px,#fbfbfb 24px);"></div>
<div style="left:232.00px;top:199.81px;font-size:9.20px;line-height:9.20px;font-weight:700;color:#000000;font-family:'Liberation Sans',sans-serif;white-space:pre;letter-spacing:0.363px;">PROPERTIES</div>
<div style="left:300.5px;top:190px;width:76.0px;height:25px;box-sizing:border-box;border:1px solid #a9a9a9;border-bottom:none;border-radius:7px 7px 0 0;background:linear-gradient(#f2f2f2 0px,#e2e2e2 4px,#f0f0f0 14px,#fbfbfb 24px);"></div>
<div style="left:307.50px;top:199.81px;font-size:9.20px;line-height:9.20px;font-weight:700;color:#000000;font-family:'Liberation Sans',sans-serif;white-space:pre;letter-spacing:0.479px;">CONDITIONS</div>
<div style="left:376.5px;top:190px;width:75.0px;height:25px;box-sizing:border-box;border:1px solid #a9a9a9;border-bottom:none;border-radius:7px 7px 0 0;background:linear-gradient(#f2f2f2 0px,#e2e2e2 4px,#f0f0f0 14px,#fbfbfb 24px);"></div>
<div style="left:390.00px;top:199.81px;font-size:9.20px;line-height:9.20px;font-weight:700;color:#2e6ce8;font-family:'Liberation Sans',sans-serif;white-space:pre;letter-spacing:0.147px;">SECTIONS</div>
<div style="left:451.5px;top:190px;width:76.5px;height:25px;box-sizing:border-box;border:1px solid #a9a9a9;border-bottom:none;border-radius:7px 7px 0 0;background:linear-gradient(#f2f2f2 0px,#e2e2e2 4px,#f0f0f0 14px,#fbfbfb 24px);"></div>
<div style="left:467.25px;top:199.81px;font-size:9.20px;line-height:9.20px;font-weight:700;color:#000000;font-family:'Liberation Sans',sans-serif;white-space:pre;letter-spacing:-0.070px;">CONTROL</div>
<div style="left:216px;top:214px;width:1346px;height:1px;background:#e8e8e8;"></div>
<div style="left:222.00px;top:226.94px;font-size:10.00px;line-height:10.00px;font-weight:400;color:#000000;font-family:'Liberation Sans',sans-serif;white-space:pre;letter-spacing:0.111px;">Select the sections and fields to be included in the form by placing a check mark in the appropriate boxes.</div>
<div style="left:222.00px;top:243.85px;font-size:10.10px;line-height:10.10px;font-weight:700;color:#0e6a78;font-family:'Liberation Sans',sans-serif;white-space:pre;letter-spacing:0.294px;">Form Code: FITP-1</div>
<div style="left:1532.50px;top:243.94px;font-size:10.00px;line-height:10.00px;font-weight:700;color:#0e6a78;font-family:'Liberation Sans',sans-serif;white-space:pre;letter-spacing:0.088px;">OMB</div>
<div style="left:222.00px;top:261.84px;font-size:10.00px;line-height:10.00px;font-weight:400;color:#000000;font-family:'Liberation Sans',sans-serif;white-space:pre;letter-spacing:-0.027px;">Form:</div>
<div style="left:252.50px;top:261.69px;font-size:10.18px;line-height:10.18px;font-weight:700;color:#000000;font-family:'Liberation Sans',sans-serif;white-space:pre;letter-spacing:0.662px;">FISHERIES INTERNATIONAL TRADE PERMIT APPLICATION FORM</div>
<div style="left:221px;top:419px;width:225px;height:18px;background:#e1ecf7;"></div>
<svg style="left:222px;top:278px" width="14" height="15" viewBox="0 0 14 15"><rect x="3" y="1" width="9" height="9" rx="1" fill="#4aa8f0" stroke="#2a6fb8" stroke-width=".8"/><path d="M4,2 L11,2 L11,5 L4,7 Z" fill="#9fd8ff" opacity=".8"/><ellipse cx="7" cy="12" rx="4.5" ry="1.6" fill="#b8b8d8" stroke="#7070a8" stroke-width=".6"/><rect x="6" y="9.5" width="2" height="2" fill="#5a5a9a"/></svg>
<div style="left:240.20px;top:281.84px;font-size:10.00px;line-height:10.00px;font-weight:700;color:#5e006e;font-family:'Liberation Sans',sans-serif;white-space:pre;">Form</div>
<div style="left:227px;top:293px;width:1px;height:513px;background:repeating-linear-gradient(#8a8a8a 0 1px,transparent 1px 2px);"></div>
<div style="left:245px;top:309px;width:1px;height:29px;background:repeating-linear-gradient(#8a8a8a 0 1px,transparent 1px 2px);"></div>
<div style="left:245px;top:363px;width:1px;height:11px;background:repeating-linear-gradient(#8a8a8a 0 1px,transparent 1px 2px);"></div>
<div style="left:245px;top:435px;width:1px;height:11px;background:repeating-linear-gradient(#8a8a8a 0 1px,transparent 1px 2px);"></div>
<div style="left:245px;top:507px;width:1px;height:173px;background:repeating-linear-gradient(#8a8a8a 0 1px,transparent 1px 2px);"></div>
<div style="left:263px;top:561px;width:1px;height:29px;background:repeating-linear-gradient(#8a8a8a 0 1px,transparent 1px 2px);"></div>
<div style="left:263px;top:633px;width:1px;height:11px;background:repeating-linear-gradient(#8a8a8a 0 1px,transparent 1px 2px);"></div>
<div style="left:245px;top:741px;width:1px;height:29px;background:repeating-linear-gradient(#8a8a8a 0 1px,transparent 1px 2px);"></div>
<div style="left:223.0px;top:297.5px;width:9px;height:9px;box-sizing:border-box;border:1px solid #9fb3cc;border-radius:2px;background:linear-gradient(#ffffff,#dfe7f0);"></div>
<div style="left:225.0px;top:301.5px;width:5px;height:1.4px;background:#111;"></div>
<div style="left:232px;top:301px;width:7px;height:1px;background:repeating-linear-gradient(90deg,#8a8a8a 0 1px,transparent 1px 2px);"></div>
<svg style="left:241px;top:295.0px" width="14" height="15" viewBox="0 0 14 15"><rect x="3" y="2" width="8" height="11" fill="#f0f0f0" stroke="#b0b0b0" stroke-width=".6"/><rect x="4.5" y="3.5" width="5" height="1.3" fill="#8fb8ec"/><rect x="4.5" y="5.5" width="5" height="1.3" fill="#8fb8ec"/><rect x="4.5" y="7.5" width="5" height="1.3" fill="#8fb8ec"/><rect x="5.5" y="9.5" width="3" height="3.5" fill="#6a6a6a"/><path d="M0.5,13.3 L2.5,10 L4,13.3 Z M10,13.3 L11.8,10 L13.5,13.3 Z" fill="#3fae3f"/><circle cx="10.3" cy="1.2" r="1" fill="#e23a3a"/><rect x="0.5" y="13" width="13" height="0.8" fill="#5a6a5a"/></svg>
<div style="left:257px;top:296.2px;width:10px;height:10px;box-sizing:border-box;border:1px solid #b3b3b3;border-radius:2px;background:linear-gradient(#e9e9e9,#dedede);box-shadow:inset 0 0 0 0.5px #fafafa;"></div>
<svg style="left:257px;top:296.2px" width="10" height="10" viewBox="0 0 10 10"><path d="M2.2,5.2 L4.1,7.6 L7.9,2.1" stroke="#2e2e2e" stroke-width="1.9" fill="none" stroke-linecap="round" stroke-linejoin="round"/></svg>
<div style="left:271.20px;top:298.12px;font-size:10.25px;line-height:10.25px;font-weight:700;color:#5e006e;font-family:'Liberation Sans',sans-serif;white-space:pre;letter-spacing:0.029px;">Owner of Permit (Bus)</div>
<div style="left:246px;top:319px;width:11px;height:1px;background:repeating-linear-gradient(90deg,#8a8a8a 0 1px,transparent 1px 2px);"></div>
<svg style="left:257px;top:313.0px" width="18" height="16" viewBox="0 0 18 16"><g transform="translate(0,-1) scale(.95)"><rect x="3" y="2" width="8" height="11" fill="#f0f0f0" stroke="#b0b0b0" stroke-width=".6"/><rect x="4.5" y="3.5" width="5" height="1.3" fill="#8fb8ec"/><rect x="4.5" y="5.5" width="5" height="1.3" fill="#8fb8ec"/><rect x="4.5" y="7.5" width="5" height="1.3" fill="#8fb8ec"/><rect x="5.5" y="9.5" width="3" height="3.5" fill="#6a6a6a"/><path d="M0.5,13.3 L2.5,10 L4,13.3 Z M10,13.3 L11.8,10 L13.5,13.3 Z" fill="#3fae3f"/><circle cx="10.3" cy="1.2" r="1" fill="#e23a3a"/><rect x="0.5" y="13" width="13" height="0.8" fill="#5a6a5a"/></g><g transform="translate(4.5,2) scale(.9)"><ellipse cx="7" cy="11.5" rx="5.5" ry="3" fill="#3d8ff0"/><path d="M3,10 Q7,8.5 11,10 L11,12 Q7,13.5 3,12 Z" fill="#6ac0ff"/><circle cx="7" cy="5.2" r="3.6" fill="#f6caa0"/><path d="M3.3,5 Q3,1 7,1.2 Q11,1 10.7,5 Q8,2.8 3.3,5Z" fill="#a8541a"/><circle cx="1.8" cy="12" r="1" fill="#f08a1a"/><circle cx="12.2" cy="12" r="1" fill="#f08a1a"/></g></svg>
<div style="left:275px;top:314.2px;width:10px;height:10px;box-sizing:border-box;border:1px solid #b3b3b3;border-radius:2px;background:linear-gradient(#e9e9e9,#dedede);box-shadow:inset 0 0 0 0.5px #fafafa;"></div>
<div style="left:289.20px;top:316.34px;font-size:10.00px;line-height:10.00px;font-weight:400;color:#5e006e;font-family:'Liberation Sans',sans-serif;white-space:pre;transform:scaleX(0.9323);transform-origin:0 0;">Owner of Business (Ind)</div>
<div style="left:246px;top:337px;width:11px;height:1px;background:repeating-linear-gradient(90deg,#8a8a8a 0 1px,transparent 1px 2px);"></div>
<svg style="left:259px;top:331.0px" width="14" height="15" viewBox="0 0 14 15"><path d="M2.5,0.5 L9,0.5 L12,3.5 L12,14 L2.5,14 Z" fill="#fbfbfb" stroke="#d0d0d0" stroke-width=".8"/><path d="M4,3.5 L8,3.5 M4,5.5 L10.5,5.5 M4,7.5 L10.5,7.5 M4,9.5 L10.5,9.5 M4,11.5 L10.5,11.5" stroke="#a8a8a8" stroke-width=".7"/></svg>
<div style="left:275px;top:332.2px;width:10px;height:10px;box-sizing:border-box;border:1px solid #b3b3b3;border-radius:2px;background:linear-gradient(#e9e9e9,#dedede);box-shadow:inset 0 0 0 0.5px #fafafa;"></div>
<svg style="left:275px;top:332.2px" width="10" height="10" viewBox="0 0 10 10"><path d="M2.2,5.2 L4.1,7.6 L7.9,2.1" stroke="#2e2e2e" stroke-width="1.9" fill="none" stroke-linecap="round" stroke-linejoin="round"/></svg>
<div style="left:289.20px;top:334.34px;font-size:10.00px;line-height:10.00px;font-weight:400;color:#5e006e;font-family:'Liberation Sans',sans-serif;white-space:pre;transform:scaleX(0.9056);transform-origin:0 0;">Business Extended Attributes</div>
<div style="left:223.0px;top:351.5px;width:9px;height:9px;box-sizing:border-box;border:1px solid #9fb3cc;border-radius:2px;background:linear-gradient(#ffffff,#dfe7f0);"></div>
<div style="left:225.0px;top:355.5px;width:5px;height:1.4px;background:#111;"></div>
<div style="left:232px;top:355px;width:7px;height:1px;background:repeating-linear-gradient(90deg,#8a8a8a 0 1px,transparent 1px 2px);"></div>
<svg style="left:241px;top:349.0px" width="14" height="15" viewBox="0 0 14 15"><rect x="3" y="2" width="8" height="11" fill="#f0f0f0" stroke="#b0b0b0" stroke-width=".6"/><rect x="4.5" y="3.5" width="5" height="1.3" fill="#8fb8ec"/><rect x="4.5" y="5.5" width="5" height="1.3" fill="#8fb8ec"/><rect x="4.5" y="7.5" width="5" height="1.3" fill="#8fb8ec"/><rect x="5.5" y="9.5" width="3" height="3.5" fill="#6a6a6a"/><path d="M0.5,13.3 L2.5,10 L4,13.3 Z M10,13.3 L11.8,10 L13.5,13.3 Z" fill="#3fae3f"/><circle cx="10.3" cy="1.2" r="1" fill="#e23a3a"/><rect x="0.5" y="13" width="13" height="0.8" fill="#5a6a5a"/></svg>
<div style="left:257px;top:350.2px;width:10px;height:10px;box-sizing:border-box;border:1px solid #b3b3b3;border-radius:2px;background:linear-gradient(#e9e9e9,#dedede);box-shadow:inset 0 0 0 0.5px #fafafa;"></div>
<svg style="left:257px;top:350.2px" width="10" height="10" viewBox="0 0 10 10"><path d="M2.2,5.2 L4.1,7.6 L7.9,2.1" stroke="#2e2e2e" stroke-width="1.9" fill="none" stroke-linecap="round" stroke-linejoin="round"/></svg>
<div style="left:271.20px;top:352.12px;font-size:10.25px;line-height:10.25px;font-weight:700;color:#5e006e;font-family:'Liberation Sans',sans-serif;white-space:pre;letter-spacing:0.029px;">Owner of Permit (Bus)</div>
<div style="left:246px;top:373px;width:11px;height:1px;background:repeating-linear-gradient(90deg,#8a8a8a 0 1px,transparent 1px 2px);"></div>
<svg style="left:257px;top:367.0px" width="18" height="16" viewBox="0 0 18 16"><g transform="translate(0,-1) scale(.95)"><rect x="3" y="2" width="8" height="11" fill="#f0f0f0" stroke="#b0b0b0" stroke-width=".6"/><rect x="4.5" y="3.5" width="5" height="1.3" fill="#8fb8ec"/><rect x="4.5" y="5.5" width="5" height="1.3" fill="#8fb8ec"/><rect x="4.5" y="7.5" width="5" height="1.3" fill="#8fb8ec"/><rect x="5.5" y="9.5" width="3" height="3.5" fill="#6a6a6a"/><path d="M0.5,13.3 L2.5,10 L4,13.3 Z M10,13.3 L11.8,10 L13.5,13.3 Z" fill="#3fae3f"/><circle cx="10.3" cy="1.2" r="1" fill="#e23a3a"/><rect x="0.5" y="13" width="13" height="0.8" fill="#5a6a5a"/></g><g transform="translate(4.5,2) scale(.9)"><ellipse cx="7" cy="11.5" rx="5.5" ry="3" fill="#3d8ff0"/><path d="M3,10 Q7,8.5 11,10 L11,12 Q7,13.5 3,12 Z" fill="#6ac0ff"/><circle cx="7" cy="5.2" r="3.6" fill="#f6caa0"/><path d="M3.3,5 Q3,1 7,1.2 Q11,1 10.7,5 Q8,2.8 3.3,5Z" fill="#a8541a"/><circle cx="1.8" cy="12" r="1" fill="#f08a1a"/><circle cx="12.2" cy="12" r="1" fill="#f08a1a"/></g></svg>
<div style="left:275px;top:368.2px;width:10px;height:10px;box-sizing:border-box;border:1px solid #b3b3b3;border-radius:2px;background:linear-gradient(#e9e9e9,#dedede);box-shadow:inset 0 0 0 0.5px #fafafa;"></div>
<div style="left:289.20px;top:370.34px;font-size:10.00px;line-height:10.00px;font-weight:400;color:#5e006e;font-family:'Liberation Sans',sans-serif;white-space:pre;transform:scaleX(0.9323);transform-origin:0 0;">Owner of Business (Ind)</div>
<div style="left:228px;top:391px;width:11px;height:1px;background:repeating-linear-gradient(90deg,#8a8a8a 0 1px,transparent 1px 2px);"></div>
<svg style="left:241px;top:385.0px" width="14" height="15" viewBox="0 0 14 15"><ellipse cx="7" cy="11.5" rx="5.5" ry="3" fill="#3d8ff0"/><path d="M3,10 Q7,8.5 11,10 L11,12 Q7,13.5 3,12 Z" fill="#6ac0ff"/><circle cx="7" cy="5.2" r="3.6" fill="#f6caa0"/><path d="M3.3,5 Q3,1 7,1.2 Q11,1 10.7,5 Q8,2.8 3.3,5Z" fill="#a8541a"/><circle cx="1.8" cy="12" r="1" fill="#f08a1a"/><circle cx="12.2" cy="12" r="1" fill="#f08a1a"/></svg>
<div style="left:257px;top:386.2px;width:10px;height:10px;box-sizing:border-box;border:1px solid #b3b3b3;border-radius:2px;background:linear-gradient(#e9e9e9,#dedede);box-shadow:inset 0 0 0 0.5px #fafafa;"></div>
<svg style="left:257px;top:386.2px" width="10" height="10" viewBox="0 0 10 10"><path d="M2.2,5.2 L4.1,7.6 L7.9,2.1" stroke="#2e2e2e" stroke-width="1.9" fill="none" stroke-linecap="round" stroke-linejoin="round"/></svg>
<div style="left:271.20px;top:388.34px;font-size:10.00px;line-height:10.00px;font-weight:400;color:#5e006e;font-family:'Liberation Sans',sans-serif;white-space:pre;transform:scaleX(0.9551);transform-origin:0 0;">Owner of Permit (Ind)</div>
<div style="left:228px;top:409px;width:11px;height:1px;background:repeating-linear-gradient(90deg,#8a8a8a 0 1px,transparent 1px 2px);"></div>
<svg style="left:241px;top:403.0px" width="14" height="15" viewBox="0 0 14 15"><ellipse cx="7" cy="11.5" rx="5.5" ry="3" fill="#3d8ff0"/><path d="M3,10 Q7,8.5 11,10 L11,12 Q7,13.5 3,12 Z" fill="#6ac0ff"/><circle cx="7" cy="5.2" r="3.6" fill="#f6caa0"/><path d="M3.3,5 Q3,1 7,1.2 Q11,1 10.7,5 Q8,2.8 3.3,5Z" fill="#a8541a"/><circle cx="1.8" cy="12" r="1" fill="#f08a1a"/><circle cx="12.2" cy="12" r="1" fill="#f08a1a"/></svg>
<div style="left:257px;top:404.2px;width:10px;height:10px;box-sizing:border-box;border:1px solid #b3b3b3;border-radius:2px;background:linear-gradient(#e9e9e9,#dedede);box-shadow:inset 0 0 0 0.5px #fafafa;"></div>
<svg style="left:257px;top:404.2px" width="10" height="10" viewBox="0 0 10 10"><path d="M2.2,5.2 L4.1,7.6 L7.9,2.1" stroke="#2e2e2e" stroke-width="1.9" fill="none" stroke-linecap="round" stroke-linejoin="round"/></svg>
<div style="left:271.20px;top:406.34px;font-size:10.00px;line-height:10.00px;font-weight:400;color:#5e006e;font-family:'Liberation Sans',sans-serif;white-space:pre;transform:scaleX(0.9551);transform-origin:0 0;">Owner of Permit (Ind)</div>
<div style="left:223.0px;top:423.5px;width:9px;height:9px;box-sizing:border-box;border:1px solid #9fb3cc;border-radius:2px;background:linear-gradient(#ffffff,#dfe7f0);"></div>
<div style="left:225.0px;top:427.5px;width:5px;height:1.4px;background:#111;"></div>
<div style="left:232px;top:427px;width:7px;height:1px;background:repeating-linear-gradient(90deg,#8a8a8a 0 1px,transparent 1px 2px);"></div>
<svg style="left:241px;top:421.0px" width="14" height="15" viewBox="0 0 14 15"><path d="M2.5,0.5 L9,0.5 L12,3.5 L12,14 L2.5,14 Z" fill="#fbfbfb" stroke="#d0d0d0" stroke-width=".8"/><path d="M4,3.5 L8,3.5 M4,5.5 L10.5,5.5 M4,7.5 L10.5,7.5 M4,9.5 L10.5,9.5 M4,11.5 L10.5,11.5" stroke="#a8a8a8" stroke-width=".7"/></svg>
<div style="left:257px;top:422.2px;width:10px;height:10px;box-sizing:border-box;border:1px solid #b3b3b3;border-radius:2px;background:linear-gradient(#e9e9e9,#dedede);box-shadow:inset 0 0 0 0.5px #fafafa;"></div>
<svg style="left:257px;top:422.2px" width="10" height="10" viewBox="0 0 10 10"><path d="M2.2,5.2 L4.1,7.6 L7.9,2.1" stroke="#2e2e2e" stroke-width="1.9" fill="none" stroke-linecap="round" stroke-linejoin="round"/></svg>
<div style="left:271.20px;top:424.15px;font-size:10.21px;line-height:10.21px;font-weight:700;color:#5e006e;font-family:'Liberation Sans',sans-serif;white-space:pre;letter-spacing:0.007px;">Agent Of Permit (Bus)</div>
<div style="left:246px;top:445px;width:11px;height:1px;background:repeating-linear-gradient(90deg,#8a8a8a 0 1px,transparent 1px 2px);"></div>
<svg style="left:257px;top:439.0px" width="18" height="16" viewBox="0 0 18 16"><g transform="translate(0,-1) scale(.95)"><rect x="3" y="2" width="8" height="11" fill="#f0f0f0" stroke="#b0b0b0" stroke-width=".6"/><rect x="4.5" y="3.5" width="5" height="1.3" fill="#8fb8ec"/><rect x="4.5" y="5.5" width="5" height="1.3" fill="#8fb8ec"/><rect x="4.5" y="7.5" width="5" height="1.3" fill="#8fb8ec"/><rect x="5.5" y="9.5" width="3" height="3.5" fill="#6a6a6a"/><path d="M0.5,13.3 L2.5,10 L4,13.3 Z M10,13.3 L11.8,10 L13.5,13.3 Z" fill="#3fae3f"/><circle cx="10.3" cy="1.2" r="1" fill="#e23a3a"/><rect x="0.5" y="13" width="13" height="0.8" fill="#5a6a5a"/></g><g transform="translate(4.5,2) scale(.9)"><ellipse cx="7" cy="11.5" rx="5.5" ry="3" fill="#3d8ff0"/><path d="M3,10 Q7,8.5 11,10 L11,12 Q7,13.5 3,12 Z" fill="#6ac0ff"/><circle cx="7" cy="5.2" r="3.6" fill="#f6caa0"/><path d="M3.3,5 Q3,1 7,1.2 Q11,1 10.7,5 Q8,2.8 3.3,5Z" fill="#a8541a"/><circle cx="1.8" cy="12" r="1" fill="#f08a1a"/><circle cx="12.2" cy="12" r="1" fill="#f08a1a"/></g></svg>
<div style="left:275px;top:440.2px;width:10px;height:10px;box-sizing:border-box;border:1px solid #b3b3b3;border-radius:2px;background:linear-gradient(#e9e9e9,#dedede);box-shadow:inset 0 0 0 0.5px #fafafa;"></div>
<div style="left:289.20px;top:442.34px;font-size:10.00px;line-height:10.00px;font-weight:400;color:#5e006e;font-family:'Liberation Sans',sans-serif;white-space:pre;transform:scaleX(0.9323);transform-origin:0 0;">Owner of Business (Ind)</div>
<div style="left:228px;top:463px;width:11px;height:1px;background:repeating-linear-gradient(90deg,#8a8a8a 0 1px,transparent 1px 2px);"></div>
<svg style="left:241px;top:457.0px" width="14" height="15" viewBox="0 0 14 15"><path d="M2.5,0.5 L9,0.5 L12,3.5 L12,14 L2.5,14 Z" fill="#fbfbfb" stroke="#d0d0d0" stroke-width=".8"/><path d="M4,3.5 L8,3.5 M4,5.5 L10.5,5.5 M4,7.5 L10.5,7.5 M4,9.5 L10.5,9.5 M4,11.5 L10.5,11.5" stroke="#a8a8a8" stroke-width=".7"/></svg>
<div style="left:257px;top:458.2px;width:10px;height:10px;box-sizing:border-box;border:1px solid #b3b3b3;border-radius:2px;background:linear-gradient(#e9e9e9,#dedede);box-shadow:inset 0 0 0 0.5px #fafafa;"></div>
<svg style="left:257px;top:458.2px" width="10" height="10" viewBox="0 0 10 10"><path d="M2.2,5.2 L4.1,7.6 L7.9,2.1" stroke="#2e2e2e" stroke-width="1.9" fill="none" stroke-linecap="round" stroke-linejoin="round"/></svg>
<div style="left:271.20px;top:460.34px;font-size:10.00px;line-height:10.00px;font-weight:400;color:#5e006e;font-family:'Liberation Sans',sans-serif;white-space:pre;transform:scaleX(0.9246);transform-origin:0 0;">Dealer License Information</div>
<div style="left:228px;top:481px;width:11px;height:1px;background:repeating-linear-gradient(90deg,#8a8a8a 0 1px,transparent 1px 2px);"></div>
<svg style="left:241px;top:475.0px" width="14" height="15" viewBox="0 0 14 15"><path d="M2.5,0.5 L9,0.5 L12,3.5 L12,14 L2.5,14 Z" fill="#fbfbfb" stroke="#d0d0d0" stroke-width=".8"/><path d="M4,3.5 L8,3.5 M4,5.5 L10.5,5.5 M4,7.5 L10.5,7.5 M4,9.5 L10.5,9.5 M4,11.5 L10.5,11.5" stroke="#a8a8a8" stroke-width=".7"/></svg>
<div style="left:257px;top:476.2px;width:10px;height:10px;box-sizing:border-box;border:1px solid #b3b3b3;border-radius:2px;background:linear-gradient(#e9e9e9,#dedede);box-shadow:inset 0 0 0 0.5px #fafafa;"></div>
<svg style="left:257px;top:476.2px" width="10" height="10" viewBox="0 0 10 10"><path d="M2.2,5.2 L4.1,7.6 L7.9,2.1" stroke="#2e2e2e" stroke-width="1.9" fill="none" stroke-linecap="round" stroke-linejoin="round"/></svg>
<div style="left:271.20px;top:478.34px;font-size:10.00px;line-height:10.00px;font-weight:400;color:#5e006e;font-family:'Liberation Sans',sans-serif;white-space:pre;transform:scaleX(0.9189);transform-origin:0 0;">Permit Extended Attributes</div>
<div style="left:223.0px;top:495.5px;width:9px;height:9px;box-sizing:border-box;border:1px solid #9fb3cc;border-radius:2px;background:linear-gradient(#ffffff,#dfe7f0);"></div>
<div style="left:225.0px;top:499.5px;width:5px;height:1.4px;background:#111;"></div>
<div style="left:232px;top:499px;width:7px;height:1px;background:repeating-linear-gradient(90deg,#8a8a8a 0 1px,transparent 1px 2px);"></div>
<svg style="left:241px;top:493.0px" width="14" height="15" viewBox="0 0 14 15"><circle cx="7" cy="2" r="1.5" fill="none" stroke="#8a8a8a" stroke-width="1.2"/><path d="M7,3.5 L7,13 M4,5.5 L10,5.5 M1.5,9 Q2,13 7,13 Q12,13 12.5,9" stroke="#8a8a8a" stroke-width="1.6" fill="none"/></svg>
<div style="left:257px;top:494.2px;width:10px;height:10px;box-sizing:border-box;border:1px solid #b3b3b3;border-radius:2px;background:linear-gradient(#e9e9e9,#dedede);box-shadow:inset 0 0 0 0.5px #fafafa;"></div>
<div style="left:271.20px;top:496.34px;font-size:10.00px;line-height:10.00px;font-weight:700;color:#5e006e;font-family:'Liberation Sans',sans-serif;white-space:pre;transform:scaleX(0.9803);transform-origin:0 0;">Vessel</div>
<div style="left:246px;top:517px;width:11px;height:1px;background:repeating-linear-gradient(90deg,#8a8a8a 0 1px,transparent 1px 2px);"></div>
<svg style="left:259px;top:511.0px" width="14" height="15" viewBox="0 0 14 15"><rect x="3" y="2" width="8" height="11" fill="#f0f0f0" stroke="#b0b0b0" stroke-width=".6"/><rect x="4.5" y="3.5" width="5" height="1.3" fill="#8fb8ec"/><rect x="4.5" y="5.5" width="5" height="1.3" fill="#8fb8ec"/><rect x="4.5" y="7.5" width="5" height="1.3" fill="#8fb8ec"/><rect x="5.5" y="9.5" width="3" height="3.5" fill="#6a6a6a"/><path d="M0.5,13.3 L2.5,10 L4,13.3 Z M10,13.3 L11.8,10 L13.5,13.3 Z" fill="#3fae3f"/><circle cx="10.3" cy="1.2" r="1" fill="#e23a3a"/><rect x="0.5" y="13" width="13" height="0.8" fill="#5a6a5a"/></svg>
<div style="left:275px;top:512.2px;width:10px;height:10px;box-sizing:border-box;border:1px solid #b3b3b3;border-radius:2px;background:linear-gradient(#e9e9e9,#dedede);box-shadow:inset 0 0 0 0.5px #fafafa;"></div>
<div style="left:289.20px;top:514.33px;font-size:10.00px;line-height:10.00px;font-weight:400;color:#5e006e;font-family:'Liberation Sans',sans-serif;white-space:pre;transform:scaleX(0.9298);transform-origin:0 0;">Owner of Vessel (Bus)</div>
<div style="left:246px;top:535px;width:11px;height:1px;background:repeating-linear-gradient(90deg,#8a8a8a 0 1px,transparent 1px 2px);"></div>
<svg style="left:257px;top:529.0px" width="18" height="16" viewBox="0 0 18 16"><g transform="translate(0,0) scale(.7)"><path d="M7,1 L7,13 M1.5,9 Q2,13 7,13 Q12,13 12.5,9" stroke="#9a9a9a" stroke-width="1.8" fill="none"/></g><g transform="translate(4,2) scale(.9)"><ellipse cx="7" cy="11.5" rx="5.5" ry="3" fill="#3d8ff0"/><path d="M3,10 Q7,8.5 11,10 L11,12 Q7,13.5 3,12 Z" fill="#6ac0ff"/><circle cx="7" cy="5.2" r="3.6" fill="#f6caa0"/><path d="M3.3,5 Q3,1 7,1.2 Q11,1 10.7,5 Q8,2.8 3.3,5Z" fill="#a8541a"/><circle cx="1.8" cy="12" r="1" fill="#f08a1a"/><circle cx="12.2" cy="12" r="1" fill="#f08a1a"/></g></svg>
<div style="left:275px;top:530.2px;width:10px;height:10px;box-sizing:border-box;border:1px solid #b3b3b3;border-radius:2px;background:linear-gradient(#e9e9e9,#dedede);box-shadow:inset 0 0 0 0.5px #fafafa;"></div>
<div style="left:289.20px;top:532.33px;font-size:10.00px;line-height:10.00px;font-weight:400;color:#5e006e;font-family:'Liberation Sans',sans-serif;white-space:pre;transform:scaleX(0.9495);transform-origin:0 0;">Owner of Vessel (Ind)</div>
<div style="left:241.0px;top:549.5px;width:9px;height:9px;box-sizing:border-box;border:1px solid #9fb3cc;border-radius:2px;background:linear-gradient(#ffffff,#dfe7f0);"></div>
<div style="left:243.0px;top:553.5px;width:5px;height:1.4px;background:#111;"></div>
<div style="left:250px;top:553px;width:7px;height:1px;background:repeating-linear-gradient(90deg,#8a8a8a 0 1px,transparent 1px 2px);"></div>
<svg style="left:259px;top:547.0px" width="14" height="15" viewBox="0 0 14 15"><path d="M1,3 Q4,1 7,3 Q10,4.5 12,3 L10.5,10 Q8,11 5.5,9.5 Q3,8.5 1,9 Z" fill="#f8a868" stroke="#e08040" stroke-width=".5"/><path d="M10.5,2 L8,15" stroke="#a0703a" stroke-width="1.6"/></svg>
<div style="left:275px;top:548.2px;width:10px;height:10px;box-sizing:border-box;border:1px solid #b3b3b3;border-radius:2px;background:linear-gradient(#e9e9e9,#dedede);box-shadow:inset 0 0 0 0.5px #fafafa;"></div>
<div style="left:289.20px;top:550.21px;font-size:10.14px;line-height:10.14px;font-weight:700;color:#5e006e;font-family:'Liberation Sans',sans-serif;white-space:pre;letter-spacing:-0.030px;">Foreign Vessel Flag</div>
<div style="left:264px;top:571px;width:11px;height:1px;background:repeating-linear-gradient(90deg,#8a8a8a 0 1px,transparent 1px 2px);"></div>
<svg style="left:275px;top:565.0px" width="18" height="16" viewBox="0 0 18 16"><g transform="translate(4,0) scale(.95)"><path d="M1,3 Q4,1 7,3 Q10,4.5 12,3 L10.5,10 Q8,11 5.5,9.5 Q3,8.5 1,9 Z" fill="#f8a868" stroke="#e08040" stroke-width=".5"/><path d="M10.5,2 L8,15" stroke="#a0703a" stroke-width="1.6"/></g><g transform="translate(0,4) scale(.8)"><ellipse cx="7" cy="11.5" rx="5.5" ry="3" fill="#3d8ff0"/><circle cx="7" cy="6" r="3.3" fill="#f6caa0"/><path d="M2.8,4.2 Q7,0 11.2,4.2 L11.2,5.2 L2.8,5.2 Z" fill="#2a3a8a"/><rect x="2.8" y="4.5" width="8.4" height="1" fill="#7a8ad0"/><circle cx="1.8" cy="12" r="1" fill="#f08a1a"/><circle cx="12.2" cy="12" r="1" fill="#f08a1a"/></g></svg>
<div style="left:293px;top:566.2px;width:10px;height:10px;box-sizing:border-box;border:1px solid #b3b3b3;border-radius:2px;background:linear-gradient(#e9e9e9,#dedede);box-shadow:inset 0 0 0 0.5px #fafafa;"></div>
<div style="left:307.20px;top:568.33px;font-size:10.00px;line-height:10.00px;font-weight:400;color:#5e006e;font-family:'Liberation Sans',sans-serif;white-space:pre;transform:scaleX(0.9066);transform-origin:0 0;">Foreign Vessel Owner</div>
<div style="left:264px;top:589px;width:11px;height:1px;background:repeating-linear-gradient(90deg,#8a8a8a 0 1px,transparent 1px 2px);"></div>
<svg style="left:275px;top:583.0px" width="18" height="16" viewBox="0 0 18 16"><g transform="translate(4,0) scale(.95)"><path d="M1,3 Q4,1 7,3 Q10,4.5 12,3 L10.5,10 Q8,11 5.5,9.5 Q3,8.5 1,9 Z" fill="#f8a868" stroke="#e08040" stroke-width=".5"/><path d="M10.5,2 L8,15" stroke="#a0703a" stroke-width="1.6"/></g><g transform="translate(0,4) scale(.8)"><ellipse cx="7" cy="11.5" rx="5.5" ry="3" fill="#3d8ff0"/><circle cx="7" cy="6" r="3.3" fill="#f6caa0"/><path d="M2.8,4.2 Q7,0 11.2,4.2 L11.2,5.2 L2.8,5.2 Z" fill="#2a3a8a"/><rect x="2.8" y="4.5" width="8.4" height="1" fill="#7a8ad0"/><circle cx="1.8" cy="12" r="1" fill="#f08a1a"/><circle cx="12.2" cy="12" r="1" fill="#f08a1a"/></g></svg>
<div style="left:293px;top:584.2px;width:10px;height:10px;box-sizing:border-box;border:1px solid #b3b3b3;border-radius:2px;background:linear-gradient(#e9e9e9,#dedede);box-shadow:inset 0 0 0 0.5px #fafafa;"></div>
<div style="left:307.20px;top:586.33px;font-size:10.00px;line-height:10.00px;font-weight:400;color:#5e006e;font-family:'Liberation Sans',sans-serif;white-space:pre;transform:scaleX(0.9069);transform-origin:0 0;">Foreign Vessel Operator</div>
<div style="left:246px;top:607px;width:11px;height:1px;background:repeating-linear-gradient(90deg,#8a8a8a 0 1px,transparent 1px 2px);"></div>
<svg style="left:259px;top:601.0px" width="14" height="15" viewBox="0 0 14 15"><ellipse cx="7" cy="11.5" rx="5.5" ry="3" fill="#3d8ff0"/><circle cx="7" cy="6" r="3.3" fill="#f6caa0"/><path d="M2.8,4.2 Q7,0 11.2,4.2 L11.2,5.2 L2.8,5.2 Z" fill="#2a3a8a"/><rect x="2.8" y="4.5" width="8.4" height="1" fill="#7a8ad0"/><circle cx="1.8" cy="12" r="1" fill="#f08a1a"/><circle cx="12.2" cy="12" r="1" fill="#f08a1a"/></svg>
<div style="left:275px;top:602.2px;width:10px;height:10px;box-sizing:border-box;border:1px solid #b3b3b3;border-radius:2px;background:linear-gradient(#e9e9e9,#dedede);box-shadow:inset 0 0 0 0.5px #fafafa;"></div>
<div style="left:289.20px;top:604.33px;font-size:10.00px;line-height:10.00px;font-weight:400;color:#5e006e;font-family:'Liberation Sans',sans-serif;white-space:pre;transform:scaleX(0.9447);transform-origin:0 0;">Operator of Vessel (Ind)</div>
<div style="left:241.0px;top:621.5px;width:9px;height:9px;box-sizing:border-box;border:1px solid #9fb3cc;border-radius:2px;background:linear-gradient(#ffffff,#dfe7f0);"></div>
<div style="left:243.0px;top:625.5px;width:5px;height:1.4px;background:#111;"></div>
<div style="left:250px;top:625px;width:7px;height:1px;background:repeating-linear-gradient(90deg,#8a8a8a 0 1px,transparent 1px 2px);"></div>
<svg style="left:259px;top:619.0px" width="14" height="15" viewBox="0 0 14 15"><rect x="3" y="2" width="8" height="11" fill="#f0f0f0" stroke="#b0b0b0" stroke-width=".6"/><rect x="4.5" y="3.5" width="5" height="1.3" fill="#8fb8ec"/><rect x="4.5" y="5.5" width="5" height="1.3" fill="#8fb8ec"/><rect x="4.5" y="7.5" width="5" height="1.3" fill="#8fb8ec"/><rect x="5.5" y="9.5" width="3" height="3.5" fill="#6a6a6a"/><path d="M0.5,13.3 L2.5,10 L4,13.3 Z M10,13.3 L11.8,10 L13.5,13.3 Z" fill="#3fae3f"/><circle cx="10.3" cy="1.2" r="1" fill="#e23a3a"/><rect x="0.5" y="13" width="13" height="0.8" fill="#5a6a5a"/></svg>
<div style="left:275px;top:620.2px;width:10px;height:10px;box-sizing:border-box;border:1px solid #b3b3b3;border-radius:2px;background:linear-gradient(#e9e9e9,#dedede);box-shadow:inset 0 0 0 0.5px #fafafa;"></div>
<div style="left:289.20px;top:622.16px;font-size:10.21px;line-height:10.21px;font-weight:700;color:#5e006e;font-family:'Liberation Sans',sans-serif;white-space:pre;">Operator of Vessel (Bus)</div>
<div style="left:264px;top:643px;width:11px;height:1px;background:repeating-linear-gradient(90deg,#8a8a8a 0 1px,transparent 1px 2px);"></div>
<svg style="left:275px;top:637.0px" width="18" height="16" viewBox="0 0 18 16"><g transform="translate(0,-1) scale(.95)"><rect x="3" y="2" width="8" height="11" fill="#f0f0f0" stroke="#b0b0b0" stroke-width=".6"/><rect x="4.5" y="3.5" width="5" height="1.3" fill="#8fb8ec"/><rect x="4.5" y="5.5" width="5" height="1.3" fill="#8fb8ec"/><rect x="4.5" y="7.5" width="5" height="1.3" fill="#8fb8ec"/><rect x="5.5" y="9.5" width="3" height="3.5" fill="#6a6a6a"/><path d="M0.5,13.3 L2.5,10 L4,13.3 Z M10,13.3 L11.8,10 L13.5,13.3 Z" fill="#3fae3f"/><circle cx="10.3" cy="1.2" r="1" fill="#e23a3a"/><rect x="0.5" y="13" width="13" height="0.8" fill="#5a6a5a"/></g><g transform="translate(4.5,2) scale(.9)"><ellipse cx="7" cy="11.5" rx="5.5" ry="3" fill="#3d8ff0"/><path d="M3,10 Q7,8.5 11,10 L11,12 Q7,13.5 3,12 Z" fill="#6ac0ff"/><circle cx="7" cy="5.2" r="3.6" fill="#f6caa0"/><path d="M3.3,5 Q3,1 7,1.2 Q11,1 10.7,5 Q8,2.8 3.3,5Z" fill="#a8541a"/><circle cx="1.8" cy="12" r="1" fill="#f08a1a"/><circle cx="12.2" cy="12" r="1" fill="#f08a1a"/></g></svg>
<div style="left:293px;top:638.2px;width:10px;height:10px;box-sizing:border-box;border:1px solid #b3b3b3;border-radius:2px;background:linear-gradient(#e9e9e9,#dedede);box-shadow:inset 0 0 0 0.5px #fafafa;"></div>
<div style="left:307.20px;top:640.33px;font-size:10.00px;line-height:10.00px;font-weight:400;color:#5e006e;font-family:'Liberation Sans',sans-serif;white-space:pre;transform:scaleX(0.9351);transform-origin:0 0;">Owner of Business (Ind)</div>
<div style="left:246px;top:661px;width:11px;height:1px;background:repeating-linear-gradient(90deg,#8a8a8a 0 1px,transparent 1px 2px);"></div>
<svg style="left:259px;top:655.0px" width="14" height="15" viewBox="0 0 14 15"><rect x="1" y="6" width="12" height="8" fill="#f8d870" stroke="#e0a030" stroke-width=".8"/><rect x="2.5" y="8" width="9" height="4" fill="#fff4c0"/><circle cx="8" cy="3" r="2.2" fill="#f6caa0"/><path d="M5.8,3 Q6,0.5 8,0.7 Q10,0.5 10.2,3 Q8,1.8 5.8,3Z" fill="#a8541a"/><path d="M4.5,8 Q8,4.5 11.5,8 Z" fill="#3d8ff0"/></svg>
<div style="left:275px;top:656.2px;width:10px;height:10px;box-sizing:border-box;border:1px solid #b3b3b3;border-radius:2px;background:linear-gradient(#e9e9e9,#dedede);box-shadow:inset 0 0 0 0.5px #fafafa;"></div>
<div style="left:289.20px;top:658.33px;font-size:10.00px;line-height:10.00px;font-weight:400;color:#5e006e;font-family:'Liberation Sans',sans-serif;white-space:pre;transform:scaleX(0.8684);transform-origin:0 0;">Sanction</div>
<div style="left:246px;top:679px;width:11px;height:1px;background:repeating-linear-gradient(90deg,#8a8a8a 0 1px,transparent 1px 2px);"></div>
<svg style="left:259px;top:673.0px" width="14" height="15" viewBox="0 0 14 15"><path d="M1,3 Q6,2 10,7 Q12,10 11,14 L9,12 Q7,9 4,8 Q1,7 1,3Z" fill="#111"/><path d="M3,5 Q5,6 6,8 Q4,7.5 3,5Z" fill="#fff"/><path d="M7,3 L9,0.5 L9,4.5Z" fill="#111"/><path d="M10,12 L13,14.5 L9.5,14Z" fill="#222"/></svg>
<div style="left:275px;top:674.2px;width:10px;height:10px;box-sizing:border-box;border:1px solid #b3b3b3;border-radius:2px;background:linear-gradient(#e9e9e9,#dedede);box-shadow:inset 0 0 0 0.5px #fafafa;"></div>
<div style="left:289.20px;top:676.33px;font-size:10.00px;line-height:10.00px;font-weight:400;color:#5e006e;font-family:'Liberation Sans',sans-serif;white-space:pre;transform:scaleX(0.9075);transform-origin:0 0;">Marine Mammal Safety</div>
<div style="left:228px;top:697px;width:11px;height:1px;background:repeating-linear-gradient(90deg,#8a8a8a 0 1px,transparent 1px 2px);"></div>
<svg style="left:241px;top:691.0px" width="14" height="15" viewBox="0 0 14 15"><circle cx="7" cy="7.5" r="6.5" fill="#1c5fd0"/><path d="M1.5,8 Q7,6 12.5,8 A5.6,5.6 0 0 1 1.5,8Z" fill="#3fb0f0"/><path d="M2.5,5 Q7,10 11.5,5 Q7,8 2.5,5Z" fill="#ffffff"/><path d="M4,3.5 L10,3.5 L7,7 Z" fill="#0a2070"/></svg>
<div style="left:257px;top:692.2px;width:10px;height:10px;box-sizing:border-box;border:1px solid #b3b3b3;border-radius:2px;background:linear-gradient(#e9e9e9,#dedede);box-shadow:inset 0 0 0 0.5px #fafafa;"></div>
<div style="left:271.20px;top:694.33px;font-size:10.00px;line-height:10.00px;font-weight:400;color:#5e006e;font-family:'Liberation Sans',sans-serif;white-space:pre;transform:scaleX(0.9084);transform-origin:0 0;">For Office Use Only</div>
<div style="left:228px;top:715px;width:11px;height:1px;background:repeating-linear-gradient(90deg,#8a8a8a 0 1px,transparent 1px 2px);"></div>
<svg style="left:241px;top:709.0px" width="14" height="15" viewBox="0 0 14 15"><path d="M2.5,0.5 L9,0.5 L12,3.5 L12,14 L2.5,14 Z" fill="#fbfbfb" stroke="#d0d0d0" stroke-width=".8"/><path d="M4,3.5 L8,3.5 M4,5.5 L10.5,5.5 M4,7.5 L10.5,7.5 M4,9.5 L10.5,9.5 M4,11.5 L10.5,11.5" stroke="#a8a8a8" stroke-width=".7"/></svg>
<div style="left:257px;top:710.2px;width:10px;height:10px;box-sizing:border-box;border:1px solid #b3b3b3;border-radius:2px;background:linear-gradient(#e9e9e9,#dedede);box-shadow:inset 0 0 0 0.5px #fafafa;"></div>
<div style="left:271.20px;top:712.33px;font-size:10.00px;line-height:10.00px;font-weight:400;color:#5e006e;font-family:'Liberation Sans',sans-serif;white-space:pre;transform:scaleX(0.8994);transform-origin:0 0;">Authorized Gear</div>
<div style="left:223.0px;top:729.5px;width:9px;height:9px;box-sizing:border-box;border:1px solid #9fb3cc;border-radius:2px;background:linear-gradient(#ffffff,#dfe7f0);"></div>
<div style="left:225.0px;top:733.5px;width:5px;height:1.4px;background:#111;"></div>
<div style="left:232px;top:733px;width:7px;height:1px;background:repeating-linear-gradient(90deg,#8a8a8a 0 1px,transparent 1px 2px);"></div>
<svg style="left:241px;top:727.0px" width="14" height="15" viewBox="0 0 14 15"><path d="M2.5,0.5 L9,0.5 L12,3.5 L12,14 L2.5,14 Z" fill="#fbfbfb" stroke="#d0d0d0" stroke-width=".8"/><path d="M4,3.5 L8,3.5 M4,5.5 L10.5,5.5 M4,7.5 L10.5,7.5 M4,9.5 L10.5,9.5 M4,11.5 L10.5,11.5" stroke="#a8a8a8" stroke-width=".7"/></svg>
<div style="left:257px;top:728.2px;width:10px;height:10px;box-sizing:border-box;border:1px solid #b3b3b3;border-radius:2px;background:linear-gradient(#e9e9e9,#dedede);box-shadow:inset 0 0 0 0.5px #fafafa;"></div>
<div style="left:271.20px;top:730.33px;font-size:10.00px;line-height:10.00px;font-weight:700;color:#5e006e;font-family:'Liberation Sans',sans-serif;white-space:pre;transform:scaleX(0.9766);transform-origin:0 0;">Vessel Processor</div>
<div style="left:246px;top:751px;width:11px;height:1px;background:repeating-linear-gradient(90deg,#8a8a8a 0 1px,transparent 1px 2px);"></div>
<svg style="left:259px;top:745.0px" width="14" height="15" viewBox="0 0 14 15"><rect x="3" y="2" width="8" height="11" fill="#f0f0f0" stroke="#b0b0b0" stroke-width=".6"/><rect x="4.5" y="3.5" width="5" height="1.3" fill="#8fb8ec"/><rect x="4.5" y="5.5" width="5" height="1.3" fill="#8fb8ec"/><rect x="4.5" y="7.5" width="5" height="1.3" fill="#8fb8ec"/><rect x="5.5" y="9.5" width="3" height="3.5" fill="#6a6a6a"/><path d="M0.5,13.3 L2.5,10 L4,13.3 Z M10,13.3 L11.8,10 L13.5,13.3 Z" fill="#3fae3f"/><circle cx="10.3" cy="1.2" r="1" fill="#e23a3a"/><rect x="0.5" y="13" width="13" height="0.8" fill="#5a6a5a"/></svg>
<div style="left:275px;top:746.2px;width:10px;height:10px;box-sizing:border-box;border:1px solid #b3b3b3;border-radius:2px;background:linear-gradient(#e9e9e9,#dedede);box-shadow:inset 0 0 0 0.5px #fafafa;"></div>
<div style="left:289.20px;top:748.33px;font-size:10.00px;line-height:10.00px;font-weight:400;color:#5e006e;font-family:'Liberation Sans',sans-serif;white-space:pre;transform:scaleX(0.9298);transform-origin:0 0;">Owner of Vessel (Bus)</div>
<div style="left:246px;top:769px;width:11px;height:1px;background:repeating-linear-gradient(90deg,#8a8a8a 0 1px,transparent 1px 2px);"></div>
<svg style="left:257px;top:763.0px" width="18" height="16" viewBox="0 0 18 16"><g transform="translate(0,0) scale(.7)"><path d="M7,1 L7,13 M1.5,9 Q2,13 7,13 Q12,13 12.5,9" stroke="#9a9a9a" stroke-width="1.8" fill="none"/></g><g transform="translate(4,2) scale(.9)"><ellipse cx="7" cy="11.5" rx="5.5" ry="3" fill="#3d8ff0"/><path d="M3,10 Q7,8.5 11,10 L11,12 Q7,13.5 3,12 Z" fill="#6ac0ff"/><circle cx="7" cy="5.2" r="3.6" fill="#f6caa0"/><path d="M3.3,5 Q3,1 7,1.2 Q11,1 10.7,5 Q8,2.8 3.3,5Z" fill="#a8541a"/><circle cx="1.8" cy="12" r="1" fill="#f08a1a"/><circle cx="12.2" cy="12" r="1" fill="#f08a1a"/></g></svg>
<div style="left:275px;top:764.2px;width:10px;height:10px;box-sizing:border-box;border:1px solid #b3b3b3;border-radius:2px;background:linear-gradient(#e9e9e9,#dedede);box-shadow:inset 0 0 0 0.5px #fafafa;"></div>
<div style="left:289.20px;top:766.33px;font-size:10.00px;line-height:10.00px;font-weight:400;color:#5e006e;font-family:'Liberation Sans',sans-serif;white-space:pre;transform:scaleX(0.9495);transform-origin:0 0;">Owner of Vessel (Ind)</div>
<div style="left:228px;top:787px;width:11px;height:1px;background:repeating-linear-gradient(90deg,#8a8a8a 0 1px,transparent 1px 2px);"></div>
<svg style="left:241px;top:781.0px" width="14" height="15" viewBox="0 0 14 15"><ellipse cx="7" cy="11.5" rx="5.5" ry="3" fill="#3d8ff0"/><circle cx="7" cy="6" r="3.3" fill="#f6caa0"/><path d="M2.8,4.2 Q7,0 11.2,4.2 L11.2,5.2 L2.8,5.2 Z" fill="#2a3a8a"/><rect x="2.8" y="4.5" width="8.4" height="1" fill="#7a8ad0"/><circle cx="1.8" cy="12" r="1" fill="#f08a1a"/><circle cx="12.2" cy="12" r="1" fill="#f08a1a"/></svg>
<div style="left:257px;top:782.2px;width:10px;height:10px;box-sizing:border-box;border:1px solid #b3b3b3;border-radius:2px;background:linear-gradient(#e9e9e9,#dedede);box-shadow:inset 0 0 0 0.5px #fafafa;"></div>
<div style="left:271.20px;top:784.33px;font-size:10.00px;line-height:10.00px;font-weight:400;color:#5e006e;font-family:'Liberation Sans',sans-serif;white-space:pre;transform:scaleX(0.9120);transform-origin:0 0;">Captain Of Vessel</div>
<div style="left:228px;top:805px;width:11px;height:1px;background:repeating-linear-gradient(90deg,#8a8a8a 0 1px,transparent 1px 2px);"></div>
<svg style="left:241px;top:799.0px" width="14" height="15" viewBox="0 0 14 15"><ellipse cx="7" cy="11.5" rx="5.5" ry="3" fill="#3d8ff0"/><path d="M3,10 Q7,8.5 11,10 L11,12 Q7,13.5 3,12 Z" fill="#6ac0ff"/><circle cx="7" cy="5.2" r="3.6" fill="#f6caa0"/><path d="M3.3,5 Q3,1 7,1.2 Q11,1 10.7,5 Q8,2.8 3.3,5Z" fill="#a8541a"/><circle cx="1.8" cy="12" r="1" fill="#f08a1a"/><circle cx="12.2" cy="12" r="1" fill="#f08a1a"/></svg>
<div style="left:257px;top:800.2px;width:10px;height:10px;box-sizing:border-box;border:1px solid #b3b3b3;border-radius:2px;background:linear-gradient(#e9e9e9,#dedede);box-shadow:inset 0 0 0 0.5px #fafafa;"></div>
<svg style="left:257px;top:800.2px" width="10" height="10" viewBox="0 0 10 10"><path d="M2.2,5.2 L4.1,7.6 L7.9,2.1" stroke="#2e2e2e" stroke-width="1.9" fill="none" stroke-linecap="round" stroke-linejoin="round"/></svg>
<div style="left:271.20px;top:802.33px;font-size:10.00px;line-height:10.00px;font-weight:400;color:#5e006e;font-family:'Liberation Sans',sans-serif;white-space:pre;transform:scaleX(0.9181);transform-origin:0 0;">Applicant Of Permit</div>
<div style="left:446px;top:277px;width:1111px;height:923px;background:#e1ecf7;"></div>
<div style="left:458.00px;top:292.31px;font-size:12.03px;line-height:12.03px;font-weight:400;color:#000000;font-family:'Liberation Sans',sans-serif;white-space:pre;letter-spacing:0.023px;">SECTION:</div>
<div style="left:520.50px;top:291.73px;font-size:12.72px;line-height:12.72px;font-weight:700;color:#000000;font-family:'Liberation Sans',sans-serif;white-space:pre;letter-spacing:0.437px;">Business Agent Of Permit</div>
<div style="left:1404.50px;top:293.58px;font-size:10.30px;line-height:10.30px;font-weight:400;color:#222222;font-family:'Liberation Sans',sans-serif;white-space:pre;letter-spacing:0.270px;">Display sequence:</div>
<div style="left:1497px;top:289px;width:48px;height:16px;box-sizing:border-box;background:#ffffff;border:1px solid #a5a5a5;"></div>
<div style="left:1502.50px;top:293.66px;font-size:10.21px;line-height:10.21px;font-weight:400;color:#000000;font-family:'Liberation Sans',sans-serif;white-space:pre;letter-spacing:0.150px;">1.5</div>
<svg style="left:1531px;top:294px" width="9" height="7" viewBox="0 0 9 7"><path d="M0.5,0.5 L8.5,0.5 L4.5,6.5 Z" fill="#111"/></svg>
<div style="left:453px;top:314px;width:1097px;height:276px;box-sizing:border-box;background:#ffffff;border:1px solid #a9a9a9;"></div>
<div style="left:457.00px;top:319.89px;font-size:11.12px;line-height:11.12px;font-weight:700;color:#000000;font-family:'Liberation Sans',sans-serif;white-space:pre;letter-spacing:0.263px;">Section Title:</div>
<div style="left:534.25px;top:320.75px;font-size:10.10px;line-height:10.10px;font-weight:400;color:#222222;font-family:'Liberation Sans',sans-serif;white-space:pre;letter-spacing:0.162px;">(max 500 chars)</div>
<div style="left:457px;top:330px;width:1089px;height:28px;box-sizing:border-box;background:#f4f4f4;border:1px solid #a9a9a9;"></div>
<svg style="left:1536px;top:348px" width="9" height="9" viewBox="0 0 9 9"><path d="M8,2 L2,8 M8,5 L5,8" stroke="#6a6a6a" stroke-width="0.9"/></svg>
<div style="left:460.50px;top:335.53px;font-size:10.00px;line-height:10.00px;font-weight:400;color:#000000;font-family:'Liberation Sans',sans-serif;white-space:pre;letter-spacing:0.075px;">UNITED STATES REGISTERED BUSINESS AGENT INFORMATION</div>
<div style="left:457.00px;top:362.79px;font-size:11.24px;line-height:11.24px;font-weight:700;color:#000000;font-family:'Liberation Sans',sans-serif;white-space:pre;letter-spacing:0.521px;">Instructions/Remarks:</div>
<div style="left:590.50px;top:363.74px;font-size:10.12px;line-height:10.12px;font-weight:400;color:#222222;font-family:'Liberation Sans',sans-serif;white-space:pre;letter-spacing:0.170px;">(max 4000 chars)</div>
<div style="left:457px;top:373px;width:1089px;height:52px;box-sizing:border-box;background:#f4f4f4;border:1px solid #a9a9a9;"></div>
<svg style="left:1536px;top:415px" width="9" height="9" viewBox="0 0 9 9"><path d="M8,2 L2,8 M8,5 L5,8" stroke="#6a6a6a" stroke-width="0.9"/></svg>
<div style="left:460.50px;top:378.01px;font-size:10.39px;line-height:10.39px;font-weight:400;color:#000000;font-family:'Liberation Sans',sans-serif;white-space:pre;letter-spacing:0.319px;">Enter the requested information.</div>
<div style="left:462px;top:431px;width:10px;height:10px;box-sizing:border-box;border:1px solid #b3b3b3;border-radius:2px;background:linear-gradient(#e9e9e9,#dedede);box-shadow:inset 0 0 0 0.5px #fafafa;"></div>
<svg style="left:462px;top:431px" width="10" height="10" viewBox="0 0 10 10"><path d="M2.2,5.2 L4.1,7.6 L7.9,2.1" stroke="#2e2e2e" stroke-width="1.9" fill="none" stroke-linecap="round" stroke-linejoin="round"/></svg>
<div style="left:482.50px;top:432.21px;font-size:10.39px;line-height:10.39px;font-weight:400;color:#000000;font-family:'Liberation Sans',sans-serif;white-space:pre;letter-spacing:0.369px;">Repeating Section: Check if the applicant can provide multiple entries of this section (ex. multiple owners)</div>
<div style="left:462px;top:450px;width:10px;height:10px;box-sizing:border-box;border:1px solid #b3b3b3;border-radius:2px;background:linear-gradient(#e9e9e9,#dedede);box-shadow:inset 0 0 0 0.5px #fafafa;"></div>
<svg style="left:462px;top:450px" width="10" height="10" viewBox="0 0 10 10"><path d="M2.2,5.2 L4.1,7.6 L7.9,2.1" stroke="#2e2e2e" stroke-width="1.9" fill="none" stroke-linecap="round" stroke-linejoin="round"/></svg>
<div style="left:482.50px;top:450.01px;font-size:10.39px;line-height:10.39px;font-weight:400;color:#000000;font-family:'Liberation Sans',sans-serif;white-space:pre;letter-spacing:0.342px;">Conditional Section: Check if certain conditions must be met for this section to be displayed</div>
<div style="left:482px;top:469px;width:1064px;height:119px;box-sizing:border-box;background:#f4f4f4;border:1px solid #a9a9a9;"></div>
<div style="left:485px;top:472px;width:1058px;height:17px;box-sizing:border-box;background:#ffffff;border-bottom:1px solid #d2d2d2;"></div>
<div style="left:490.00px;top:477.81px;font-size:10.39px;line-height:10.39px;font-weight:400;color:#000000;font-family:'Liberation Sans',sans-serif;white-space:pre;letter-spacing:0.319px;">This section (Business Agent Of Permit) will be displayed if answers provided by the applicant match the answers to the questions defined below:</div>
<div style="left:490.00px;top:495.91px;font-size:10.27px;line-height:10.27px;font-weight:700;color:#0e6a78;font-family:'Liberation Sans',sans-serif;white-space:pre;transform:scaleX(0.9871);transform-origin:0 0;">Q:</div>
<div style="left:509.25px;top:495.81px;font-size:10.39px;line-height:10.39px;font-weight:400;color:#000000;font-family:'Liberation Sans',sans-serif;white-space:pre;letter-spacing:0.400px;">Is the applicant a(n):</div>
<div style="left:490.00px;top:511.48px;font-size:10.41px;line-height:10.41px;font-weight:700;color:#0e6a78;font-family:'Liberation Sans',sans-serif;white-space:pre;letter-spacing:0.016px;">A:</div>
<div style="left:513px;top:512.5px;width:10px;height:10px;box-sizing:border-box;border:1px solid #b3b3b3;border-radius:2px;background:linear-gradient(#e9e9e9,#dedede);box-shadow:inset 0 0 0 0.5px #fafafa;"></div>
<div style="left:534.25px;top:511.53px;font-size:10.36px;line-height:10.36px;font-weight:400;color:#000000;font-family:'Liberation Sans',sans-serif;white-space:pre;letter-spacing:0.277px;">Business based in the United States</div>
<div style="left:513px;top:532.5px;width:10px;height:10px;box-sizing:border-box;border:1px solid #b3b3b3;border-radius:2px;background:linear-gradient(#e9e9e9,#dedede);box-shadow:inset 0 0 0 0.5px #fafafa;"></div>
<svg style="left:513px;top:532.5px" width="10" height="10" viewBox="0 0 10 10"><path d="M2.2,5.2 L4.1,7.6 L7.9,2.1" stroke="#2e2e2e" stroke-width="1.9" fill="none" stroke-linecap="round" stroke-linejoin="round"/></svg>
<div style="left:534.25px;top:531.54px;font-size:10.35px;line-height:10.35px;font-weight:400;color:#000000;font-family:'Liberation Sans',sans-serif;white-space:pre;letter-spacing:0.268px;">Business based in a foreign nation</div>
<div style="left:513px;top:552.5px;width:10px;height:10px;box-sizing:border-box;border:1px solid #b3b3b3;border-radius:2px;background:linear-gradient(#e9e9e9,#dedede);box-shadow:inset 0 0 0 0.5px #fafafa;"></div>
<div style="left:534.25px;top:551.51px;font-size:10.39px;line-height:10.39px;font-weight:400;color:#000000;font-family:'Liberation Sans',sans-serif;white-space:pre;letter-spacing:0.373px;">Individual based in the United States</div>
<div style="left:513px;top:572.5px;width:10px;height:10px;box-sizing:border-box;border:1px solid #b3b3b3;border-radius:2px;background:linear-gradient(#e9e9e9,#dedede);box-shadow:inset 0 0 0 0.5px #fafafa;"></div>
<svg style="left:513px;top:572.5px" width="10" height="10" viewBox="0 0 10 10"><path d="M2.2,5.2 L4.1,7.6 L7.9,2.1" stroke="#2e2e2e" stroke-width="1.9" fill="none" stroke-linecap="round" stroke-linejoin="round"/></svg>
<div style="left:534.25px;top:571.51px;font-size:10.39px;line-height:10.39px;font-weight:400;color:#000000;font-family:'Liberation Sans',sans-serif;white-space:pre;letter-spacing:0.350px;">Individual based in a foreign nation</div>
<div style="left:453px;top:598px;width:1097px;height:602px;box-sizing:border-box;background:#ffffff;border:1px solid #a9a9a9;border-bottom:none;"></div>
<div style="left:454px;top:599px;width:1095px;height:27px;background:#e4e4e4;"></div>
<div style="left:1345px;top:598px;width:1px;height:602px;background:#a9a9a9;"></div>
<div style="left:1392px;top:598px;width:1px;height:602px;background:#a9a9a9;"></div>
<div style="left:1418px;top:598px;width:1px;height:602px;background:#a9a9a9;"></div>
<div style="left:1444px;top:598px;width:1px;height:602px;background:#a9a9a9;"></div>
<div style="left:1470px;top:598px;width:1px;height:602px;background:#a9a9a9;"></div>
<div style="left:1511px;top:598px;width:1px;height:602px;background:#a9a9a9;"></div>
<div style="left:453px;top:626px;width:1097px;height:1px;background:#a9a9a9;"></div>
<div style="left:457.50px;top:615.06px;font-size:10.92px;line-height:10.92px;font-weight:700;color:#000000;font-family:'Liberation Sans',sans-serif;white-space:pre;letter-spacing:0.173px;">Section Fields</div>
<div style="left:1359.00px;top:617.23px;font-size:8.00px;line-height:8.00px;font-weight:700;color:#3c9a3c;font-family:'Liberation Sans',sans-serif;white-space:pre;letter-spacing:0.641px;">Type</div>
<div style="left:1397.70px;top:617.23px;font-size:8.00px;line-height:8.00px;font-weight:700;color:#3c9a3c;font-family:'Liberation Sans',sans-serif;white-space:pre;letter-spacing:0.606px;">Incl</div>
<div style="left:1423.40px;top:617.23px;font-size:8.00px;line-height:8.00px;font-weight:700;color:#3c9a3c;font-family:'Liberation Sans',sans-serif;white-space:pre;letter-spacing:0.037px;">Req</div>
<div style="left:1448.90px;top:617.23px;font-size:8.00px;line-height:8.00px;font-weight:700;color:#3c9a3c;font-family:'Liberation Sans',sans-serif;white-space:pre;letter-spacing:1.183px;">R/O</div>
<div style="left:1483.00px;top:617.23px;font-size:8.00px;line-height:8.00px;font-weight:700;color:#3c9a3c;font-family:'Liberation Sans',sans-serif;white-space:pre;letter-spacing:0.164px;">Seq</div>
<div style="left:1515.00px;top:617.23px;font-size:8.00px;line-height:8.00px;font-weight:700;color:#1e2a78;font-family:'Liberation Sans',sans-serif;white-space:pre;letter-spacing:0.603px;">More...</div>
<svg style="left:1397.7px;top:602.5px" width="13" height="13" viewBox="0 0 13 13"><defs><radialGradient id="hg" cx=".4" cy=".35" r=".7"><stop offset="0" stop-color="#c4c4c4"/><stop offset="1" stop-color="#8c8c8c"/></radialGradient></defs><circle cx="6.5" cy="6.5" r="5.8" fill="none" stroke="#cfcfcf" stroke-width="0.8" stroke-dasharray="1 1"/><circle cx="6.5" cy="6.5" r="4.6" fill="url(#hg)"/><path d="M4.9,5.2 Q4.9,3.4 6.6,3.4 Q8.3,3.4 8.3,5 Q8.3,6 7.2,6.6 Q6.6,7 6.6,7.8" stroke="#ffffff" stroke-width="1.3" fill="none"/><circle cx="6.6" cy="9.3" r="0.8" fill="#fff"/></svg>
<svg style="left:1424.0px;top:602.5px" width="13" height="13" viewBox="0 0 13 13"><defs><radialGradient id="hg" cx=".4" cy=".35" r=".7"><stop offset="0" stop-color="#c4c4c4"/><stop offset="1" stop-color="#8c8c8c"/></radialGradient></defs><circle cx="6.5" cy="6.5" r="5.8" fill="none" stroke="#cfcfcf" stroke-width="0.8" stroke-dasharray="1 1"/><circle cx="6.5" cy="6.5" r="4.6" fill="url(#hg)"/><path d="M4.9,5.2 Q4.9,3.4 6.6,3.4 Q8.3,3.4 8.3,5 Q8.3,6 7.2,6.6 Q6.6,7 6.6,7.8" stroke="#ffffff" stroke-width="1.3" fill="none"/><circle cx="6.6" cy="9.3" r="0.8" fill="#fff"/></svg>
<svg style="left:1450.0px;top:602.5px" width="13" height="13" viewBox="0 0 13 13"><defs><radialGradient id="hg" cx=".4" cy=".35" r=".7"><stop offset="0" stop-color="#c4c4c4"/><stop offset="1" stop-color="#8c8c8c"/></radialGradient></defs><circle cx="6.5" cy="6.5" r="5.8" fill="none" stroke="#cfcfcf" stroke-width="0.8" stroke-dasharray="1 1"/><circle cx="6.5" cy="6.5" r="4.6" fill="url(#hg)"/><path d="M4.9,5.2 Q4.9,3.4 6.6,3.4 Q8.3,3.4 8.3,5 Q8.3,6 7.2,6.6 Q6.6,7 6.6,7.8" stroke="#ffffff" stroke-width="1.3" fill="none"/><circle cx="6.6" cy="9.3" r="0.8" fill="#fff"/></svg>
<svg style="left:1483.0px;top:602.5px" width="13" height="13" viewBox="0 0 13 13"><defs><radialGradient id="hg" cx=".4" cy=".35" r=".7"><stop offset="0" stop-color="#c4c4c4"/><stop offset="1" stop-color="#8c8c8c"/></radialGradient></defs><circle cx="6.5" cy="6.5" r="5.8" fill="none" stroke="#cfcfcf" stroke-width="0.8" stroke-dasharray="1 1"/><circle cx="6.5" cy="6.5" r="4.6" fill="url(#hg)"/><path d="M4.9,5.2 Q4.9,3.4 6.6,3.4 Q8.3,3.4 8.3,5 Q8.3,6 7.2,6.6 Q6.6,7 6.6,7.8" stroke="#ffffff" stroke-width="1.3" fill="none"/><circle cx="6.6" cy="9.3" r="0.8" fill="#fff"/></svg>
<div style="left:453px;top:647px;width:1097px;height:1px;background:#a9a9a9;"></div>
<div style="left:457.40px;top:634.35px;font-size:10.10px;line-height:10.10px;font-weight:400;color:#000000;font-family:'Liberation Sans',sans-serif;white-space:pre;letter-spacing:0.276px;">Business Name</div>
<div style="left:1358.05px;top:634.35px;font-size:10.10px;line-height:10.10px;font-weight:400;color:#000000;font-family:'Liberation Sans',sans-serif;white-space:pre;letter-spacing:1.261px;">Text</div>
<div style="left:1400px;top:632.6px;width:10px;height:10px;box-sizing:border-box;border:1px solid #b3b3b3;border-radius:2px;background:linear-gradient(#e9e9e9,#dedede);box-shadow:inset 0 0 0 0.5px #fafafa;"></div>
<svg style="left:1400px;top:632.6px" width="10" height="10" viewBox="0 0 10 10"><path d="M2.2,5.2 L4.1,7.6 L7.9,2.1" stroke="#2e2e2e" stroke-width="1.9" fill="none" stroke-linecap="round" stroke-linejoin="round"/></svg>
<div style="left:1426px;top:632.6px;width:10px;height:10px;box-sizing:border-box;border:1px solid #b3b3b3;border-radius:2px;background:linear-gradient(#e9e9e9,#dedede);box-shadow:inset 0 0 0 0.5px #fafafa;"></div>
<svg style="left:1426px;top:632.6px" width="10" height="10" viewBox="0 0 10 10"><path d="M2.2,5.2 L4.1,7.6 L7.9,2.1" stroke="#2e2e2e" stroke-width="1.9" fill="none" stroke-linecap="round" stroke-linejoin="round"/></svg>
<div style="left:1452px;top:632.6px;width:10px;height:10px;box-sizing:border-box;border:1px solid #b3b3b3;border-radius:2px;background:linear-gradient(#e9e9e9,#dedede);box-shadow:inset 0 0 0 0.5px #fafafa;"></div>
<div style="left:1474px;top:630px;width:33px;height:16px;box-sizing:border-box;background:#f4f4f4;border-top:1px solid #8a8a8a;border-left:1px solid #8a8a8a;border-right:1px solid #e0e0e0;border-bottom:1px solid #e0e0e0;"></div>
<div style="left:1475.80px;top:634.35px;font-size:10.10px;line-height:10.10px;font-weight:400;color:#000000;font-family:'Liberation Sans',sans-serif;white-space:pre;letter-spacing:0.466px;">10</div>
<svg style="left:1523px;top:631.6px" width="14" height="14" viewBox="0 0 14 14"><defs><radialGradient id="mg" cx=".4" cy=".35" r=".7"><stop offset="0" stop-color="#ffffff"/><stop offset=".55" stop-color="#cfe2f6"/><stop offset="1" stop-color="#8ab0dc"/></radialGradient></defs><circle cx="5.2" cy="5.2" r="4.3" fill="url(#mg)" stroke="#7fa0c8" stroke-width=".8"/><path d="M8.3,8.3 L12.3,12.3" stroke="#c8a060" stroke-width="2.4" stroke-linecap="round"/></svg>
<div style="left:453px;top:668px;width:1097px;height:1px;background:#a9a9a9;"></div>
<div style="left:457.40px;top:655.35px;font-size:10.10px;line-height:10.10px;font-weight:400;color:#000000;font-family:'Liberation Sans',sans-serif;white-space:pre;letter-spacing:0.502px;">Date of Incorporation</div>
<div style="left:1357.60px;top:655.35px;font-size:10.10px;line-height:10.10px;font-weight:400;color:#000000;font-family:'Liberation Sans',sans-serif;white-space:pre;letter-spacing:0.624px;">Date</div>
<div style="left:1400px;top:653.6px;width:10px;height:10px;box-sizing:border-box;border:1px solid #b3b3b3;border-radius:2px;background:linear-gradient(#e9e9e9,#dedede);box-shadow:inset 0 0 0 0.5px #fafafa;"></div>
<svg style="left:1400px;top:653.6px" width="10" height="10" viewBox="0 0 10 10"><path d="M2.2,5.2 L4.1,7.6 L7.9,2.1" stroke="#2e2e2e" stroke-width="1.9" fill="none" stroke-linecap="round" stroke-linejoin="round"/></svg>
<div style="left:1426px;top:653.6px;width:10px;height:10px;box-sizing:border-box;border:1px solid #b3b3b3;border-radius:2px;background:linear-gradient(#e9e9e9,#dedede);box-shadow:inset 0 0 0 0.5px #fafafa;"></div>
<svg style="left:1426px;top:653.6px" width="10" height="10" viewBox="0 0 10 10"><path d="M2.2,5.2 L4.1,7.6 L7.9,2.1" stroke="#2e2e2e" stroke-width="1.9" fill="none" stroke-linecap="round" stroke-linejoin="round"/></svg>
<div style="left:1452px;top:653.6px;width:10px;height:10px;box-sizing:border-box;border:1px solid #b3b3b3;border-radius:2px;background:linear-gradient(#e9e9e9,#dedede);box-shadow:inset 0 0 0 0.5px #fafafa;"></div>
<div style="left:1474px;top:651px;width:33px;height:16px;box-sizing:border-box;background:#f4f4f4;border-top:1px solid #8a8a8a;border-left:1px solid #8a8a8a;border-right:1px solid #e0e0e0;border-bottom:1px solid #e0e0e0;"></div>
<div style="left:1475.80px;top:655.35px;font-size:10.10px;line-height:10.10px;font-weight:400;color:#000000;font-family:'Liberation Sans',sans-serif;white-space:pre;letter-spacing:0.466px;">20</div>
<svg style="left:1523px;top:652.6px" width="14" height="14" viewBox="0 0 14 14"><defs><radialGradient id="mg" cx=".4" cy=".35" r=".7"><stop offset="0" stop-color="#ffffff"/><stop offset=".55" stop-color="#cfe2f6"/><stop offset="1" stop-color="#8ab0dc"/></radialGradient></defs><circle cx="5.2" cy="5.2" r="4.3" fill="url(#mg)" stroke="#7fa0c8" stroke-width=".8"/><path d="M8.3,8.3 L12.3,12.3" stroke="#c8a060" stroke-width="2.4" stroke-linecap="round"/></svg>
<div style="left:453px;top:689px;width:1097px;height:1px;background:#a9a9a9;"></div>
<div style="left:457.40px;top:676.35px;font-size:10.10px;line-height:10.10px;font-weight:400;color:#000000;font-family:'Liberation Sans',sans-serif;white-space:pre;letter-spacing:0.461px;">Business Tax Identification Number (EIN)</div>
<div style="left:1358.05px;top:676.35px;font-size:10.10px;line-height:10.10px;font-weight:400;color:#000000;font-family:'Liberation Sans',sans-serif;white-space:pre;letter-spacing:1.261px;">Text</div>
<div style="left:1400px;top:674.6px;width:10px;height:10px;box-sizing:border-box;border:1px solid #b3b3b3;border-radius:2px;background:linear-gradient(#e9e9e9,#dedede);box-shadow:inset 0 0 0 0.5px #fafafa;"></div>
<svg style="left:1400px;top:674.6px" width="10" height="10" viewBox="0 0 10 10"><path d="M2.2,5.2 L4.1,7.6 L7.9,2.1" stroke="#2e2e2e" stroke-width="1.9" fill="none" stroke-linecap="round" stroke-linejoin="round"/></svg>
<div style="left:1426px;top:674.6px;width:10px;height:10px;box-sizing:border-box;border:1px solid #b3b3b3;border-radius:2px;background:linear-gradient(#e9e9e9,#dedede);box-shadow:inset 0 0 0 0.5px #fafafa;"></div>
<svg style="left:1426px;top:674.6px" width="10" height="10" viewBox="0 0 10 10"><path d="M2.2,5.2 L4.1,7.6 L7.9,2.1" stroke="#2e2e2e" stroke-width="1.9" fill="none" stroke-linecap="round" stroke-linejoin="round"/></svg>
<div style="left:1452px;top:674.6px;width:10px;height:10px;box-sizing:border-box;border:1px solid #b3b3b3;border-radius:2px;background:linear-gradient(#e9e9e9,#dedede);box-shadow:inset 0 0 0 0.5px #fafafa;"></div>
<div style="left:1474px;top:672px;width:33px;height:16px;box-sizing:border-box;background:#f4f4f4;border-top:1px solid #8a8a8a;border-left:1px solid #8a8a8a;border-right:1px solid #e0e0e0;border-bottom:1px solid #e0e0e0;"></div>
<div style="left:1475.80px;top:676.35px;font-size:10.10px;line-height:10.10px;font-weight:400;color:#000000;font-family:'Liberation Sans',sans-serif;white-space:pre;letter-spacing:0.466px;">30</div>
<svg style="left:1523px;top:673.6px" width="14" height="14" viewBox="0 0 14 14"><defs><radialGradient id="mg" cx=".4" cy=".35" r=".7"><stop offset="0" stop-color="#ffffff"/><stop offset=".55" stop-color="#cfe2f6"/><stop offset="1" stop-color="#8ab0dc"/></radialGradient></defs><circle cx="5.2" cy="5.2" r="4.3" fill="url(#mg)" stroke="#7fa0c8" stroke-width=".8"/><path d="M8.3,8.3 L12.3,12.3" stroke="#c8a060" stroke-width="2.4" stroke-linecap="round"/></svg>
<div style="left:453px;top:710px;width:1097px;height:1px;background:#a9a9a9;"></div>
<div style="left:457.40px;top:697.35px;font-size:10.10px;line-height:10.10px;font-weight:400;color:#000000;font-family:'Liberation Sans',sans-serif;white-space:pre;letter-spacing:0.303px;">DUNN Number</div>
<div style="left:1358.05px;top:697.35px;font-size:10.10px;line-height:10.10px;font-weight:400;color:#000000;font-family:'Liberation Sans',sans-serif;white-space:pre;letter-spacing:1.261px;">Text</div>
<div style="left:1400px;top:695.6px;width:10px;height:10px;box-sizing:border-box;border:1px solid #b3b3b3;border-radius:2px;background:linear-gradient(#e9e9e9,#dedede);box-shadow:inset 0 0 0 0.5px #fafafa;"></div>
<svg style="left:1400px;top:695.6px" width="10" height="10" viewBox="0 0 10 10"><path d="M2.2,5.2 L4.1,7.6 L7.9,2.1" stroke="#2e2e2e" stroke-width="1.9" fill="none" stroke-linecap="round" stroke-linejoin="round"/></svg>
<div style="left:1426px;top:695.6px;width:10px;height:10px;box-sizing:border-box;border:1px solid #b3b3b3;border-radius:2px;background:linear-gradient(#e9e9e9,#dedede);box-shadow:inset 0 0 0 0.5px #fafafa;"></div>
<div style="left:1452px;top:695.6px;width:10px;height:10px;box-sizing:border-box;border:1px solid #b3b3b3;border-radius:2px;background:linear-gradient(#e9e9e9,#dedede);box-shadow:inset 0 0 0 0.5px #fafafa;"></div>
<div style="left:1474px;top:693px;width:33px;height:16px;box-sizing:border-box;background:#f4f4f4;border-top:1px solid #8a8a8a;border-left:1px solid #8a8a8a;border-right:1px solid #e0e0e0;border-bottom:1px solid #e0e0e0;"></div>
<div style="left:1475.80px;top:697.35px;font-size:10.10px;line-height:10.10px;font-weight:400;color:#000000;font-family:'Liberation Sans',sans-serif;white-space:pre;letter-spacing:0.466px;">40</div>
<svg style="left:1523px;top:694.6px" width="14" height="14" viewBox="0 0 14 14"><defs><radialGradient id="mg" cx=".4" cy=".35" r=".7"><stop offset="0" stop-color="#ffffff"/><stop offset=".55" stop-color="#cfe2f6"/><stop offset="1" stop-color="#8ab0dc"/></radialGradient></defs><circle cx="5.2" cy="5.2" r="4.3" fill="url(#mg)" stroke="#7fa0c8" stroke-width=".8"/><path d="M8.3,8.3 L12.3,12.3" stroke="#c8a060" stroke-width="2.4" stroke-linecap="round"/></svg>
<div style="left:453px;top:731px;width:1097px;height:1px;background:#a9a9a9;"></div>
<div style="left:457.40px;top:718.35px;font-size:10.10px;line-height:10.10px;font-weight:400;color:#000000;font-family:'Liberation Sans',sans-serif;white-space:pre;letter-spacing:0.224px;">Address of Record</div>
<div style="left:1360.85px;top:718.35px;font-size:10.10px;line-height:10.10px;font-weight:400;color:#000000;font-family:'Liberation Sans',sans-serif;white-space:pre;letter-spacing:0.772px;">Set</div>
<div style="left:1400px;top:716.6px;width:10px;height:10px;box-sizing:border-box;border:1px solid #b3b3b3;border-radius:2px;background:linear-gradient(#e9e9e9,#dedede);box-shadow:inset 0 0 0 0.5px #fafafa;"></div>
<svg style="left:1400px;top:716.6px" width="10" height="10" viewBox="0 0 10 10"><path d="M2.2,5.2 L4.1,7.6 L7.9,2.1" stroke="#2e2e2e" stroke-width="1.9" fill="none" stroke-linecap="round" stroke-linejoin="round"/></svg>
<div style="left:1426px;top:716.6px;width:10px;height:10px;box-sizing:border-box;border:1px solid #b3b3b3;border-radius:2px;background:linear-gradient(#e9e9e9,#dedede);box-shadow:inset 0 0 0 0.5px #fafafa;"></div>
<svg style="left:1426px;top:716.6px" width="10" height="10" viewBox="0 0 10 10"><path d="M2.2,5.2 L4.1,7.6 L7.9,2.1" stroke="#2e2e2e" stroke-width="1.9" fill="none" stroke-linecap="round" stroke-linejoin="round"/></svg>
<div style="left:1452px;top:716.6px;width:10px;height:10px;box-sizing:border-box;border:1px solid #b3b3b3;border-radius:2px;background:linear-gradient(#e9e9e9,#dedede);box-shadow:inset 0 0 0 0.5px #fafafa;"></div>
<div style="left:1474px;top:714px;width:33px;height:16px;box-sizing:border-box;background:#f4f4f4;border-top:1px solid #8a8a8a;border-left:1px solid #8a8a8a;border-right:1px solid #e0e0e0;border-bottom:1px solid #e0e0e0;"></div>
<div style="left:1475.80px;top:718.35px;font-size:10.10px;line-height:10.10px;font-weight:400;color:#000000;font-family:'Liberation Sans',sans-serif;white-space:pre;letter-spacing:0.466px;">50</div>
<svg style="left:1523px;top:715.6px" width="14" height="14" viewBox="0 0 14 14"><defs><radialGradient id="mg" cx=".4" cy=".35" r=".7"><stop offset="0" stop-color="#ffffff"/><stop offset=".55" stop-color="#cfe2f6"/><stop offset="1" stop-color="#8ab0dc"/></radialGradient></defs><circle cx="5.2" cy="5.2" r="4.3" fill="url(#mg)" stroke="#7fa0c8" stroke-width=".8"/><path d="M8.3,8.3 L12.3,12.3" stroke="#c8a060" stroke-width="2.4" stroke-linecap="round"/></svg>
<div style="left:453px;top:752px;width:1097px;height:1px;background:#a9a9a9;"></div>
<div style="left:457.40px;top:739.35px;font-size:10.10px;line-height:10.10px;font-weight:400;color:#000000;font-family:'Liberation Sans',sans-serif;white-space:pre;letter-spacing:0.188px;">Phone of Record</div>
<div style="left:1360.85px;top:739.35px;font-size:10.10px;line-height:10.10px;font-weight:400;color:#000000;font-family:'Liberation Sans',sans-serif;white-space:pre;letter-spacing:0.772px;">Set</div>
<div style="left:1400px;top:737.6px;width:10px;height:10px;box-sizing:border-box;border:1px solid #b3b3b3;border-radius:2px;background:linear-gradient(#e9e9e9,#dedede);box-shadow:inset 0 0 0 0.5px #fafafa;"></div>
<svg style="left:1400px;top:737.6px" width="10" height="10" viewBox="0 0 10 10"><path d="M2.2,5.2 L4.1,7.6 L7.9,2.1" stroke="#2e2e2e" stroke-width="1.9" fill="none" stroke-linecap="round" stroke-linejoin="round"/></svg>
<div style="left:1426px;top:737.6px;width:10px;height:10px;box-sizing:border-box;border:1px solid #b3b3b3;border-radius:2px;background:linear-gradient(#e9e9e9,#dedede);box-shadow:inset 0 0 0 0.5px #fafafa;"></div>
<svg style="left:1426px;top:737.6px" width="10" height="10" viewBox="0 0 10 10"><path d="M2.2,5.2 L4.1,7.6 L7.9,2.1" stroke="#2e2e2e" stroke-width="1.9" fill="none" stroke-linecap="round" stroke-linejoin="round"/></svg>
<div style="left:1452px;top:737.6px;width:10px;height:10px;box-sizing:border-box;border:1px solid #b3b3b3;border-radius:2px;background:linear-gradient(#e9e9e9,#dedede);box-shadow:inset 0 0 0 0.5px #fafafa;"></div>
<div style="left:1474px;top:735px;width:33px;height:16px;box-sizing:border-box;background:#f4f4f4;border-top:1px solid #8a8a8a;border-left:1px solid #8a8a8a;border-right:1px solid #e0e0e0;border-bottom:1px solid #e0e0e0;"></div>
<div style="left:1475.80px;top:739.35px;font-size:10.10px;line-height:10.10px;font-weight:400;color:#000000;font-family:'Liberation Sans',sans-serif;white-space:pre;letter-spacing:0.466px;">60</div>
<svg style="left:1523px;top:736.6px" width="14" height="14" viewBox="0 0 14 14"><defs><radialGradient id="mg" cx=".4" cy=".35" r=".7"><stop offset="0" stop-color="#ffffff"/><stop offset=".55" stop-color="#cfe2f6"/><stop offset="1" stop-color="#8ab0dc"/></radialGradient></defs><circle cx="5.2" cy="5.2" r="4.3" fill="url(#mg)" stroke="#7fa0c8" stroke-width=".8"/><path d="M8.3,8.3 L12.3,12.3" stroke="#c8a060" stroke-width="2.4" stroke-linecap="round"/></svg>
<div style="left:453px;top:773px;width:1097px;height:1px;background:#a9a9a9;"></div>
<div style="left:457.40px;top:760.35px;font-size:10.10px;line-height:10.10px;font-weight:400;color:#000000;font-family:'Liberation Sans',sans-serif;white-space:pre;letter-spacing:0.335px;">E-mail of Record</div>
<div style="left:1358.05px;top:760.35px;font-size:10.10px;line-height:10.10px;font-weight:400;color:#000000;font-family:'Liberation Sans',sans-serif;white-space:pre;letter-spacing:1.261px;">Text</div>
<div style="left:1400px;top:758.6px;width:10px;height:10px;box-sizing:border-box;border:1px solid #b3b3b3;border-radius:2px;background:linear-gradient(#e9e9e9,#dedede);box-shadow:inset 0 0 0 0.5px #fafafa;"></div>
<svg style="left:1400px;top:758.6px" width="10" height="10" viewBox="0 0 10 10"><path d="M2.2,5.2 L4.1,7.6 L7.9,2.1" stroke="#2e2e2e" stroke-width="1.9" fill="none" stroke-linecap="round" stroke-linejoin="round"/></svg>
<div style="left:1426px;top:758.6px;width:10px;height:10px;box-sizing:border-box;border:1px solid #b3b3b3;border-radius:2px;background:linear-gradient(#e9e9e9,#dedede);box-shadow:inset 0 0 0 0.5px #fafafa;"></div>
<svg style="left:1426px;top:758.6px" width="10" height="10" viewBox="0 0 10 10"><path d="M2.2,5.2 L4.1,7.6 L7.9,2.1" stroke="#2e2e2e" stroke-width="1.9" fill="none" stroke-linecap="round" stroke-linejoin="round"/></svg>
<div style="left:1452px;top:758.6px;width:10px;height:10px;box-sizing:border-box;border:1px solid #b3b3b3;border-radius:2px;background:linear-gradient(#e9e9e9,#dedede);box-shadow:inset 0 0 0 0.5px #fafafa;"></div>
<div style="left:1474px;top:756px;width:33px;height:16px;box-sizing:border-box;background:#f4f4f4;border-top:1px solid #8a8a8a;border-left:1px solid #8a8a8a;border-right:1px solid #e0e0e0;border-bottom:1px solid #e0e0e0;"></div>
<div style="left:1475.80px;top:760.35px;font-size:10.10px;line-height:10.10px;font-weight:400;color:#000000;font-family:'Liberation Sans',sans-serif;white-space:pre;letter-spacing:0.466px;">70</div>
<svg style="left:1523px;top:757.6px" width="14" height="14" viewBox="0 0 14 14"><defs><radialGradient id="mg" cx=".4" cy=".35" r=".7"><stop offset="0" stop-color="#ffffff"/><stop offset=".55" stop-color="#cfe2f6"/><stop offset="1" stop-color="#8ab0dc"/></radialGradient></defs><circle cx="5.2" cy="5.2" r="4.3" fill="url(#mg)" stroke="#7fa0c8" stroke-width=".8"/><path d="M8.3,8.3 L12.3,12.3" stroke="#c8a060" stroke-width="2.4" stroke-linecap="round"/></svg>
<div style="left:453px;top:794px;width:1097px;height:1px;background:#a9a9a9;"></div>
<div style="left:457.40px;top:781.35px;font-size:10.10px;line-height:10.10px;font-weight:400;color:#000000;font-family:'Liberation Sans',sans-serif;white-space:pre;letter-spacing:0.302px;">Contact Person</div>
<div style="left:1358.05px;top:781.35px;font-size:10.10px;line-height:10.10px;font-weight:400;color:#000000;font-family:'Liberation Sans',sans-serif;white-space:pre;letter-spacing:1.261px;">Text</div>
<div style="left:1400px;top:779.6px;width:10px;height:10px;box-sizing:border-box;border:1px solid #b3b3b3;border-radius:2px;background:linear-gradient(#e9e9e9,#dedede);box-shadow:inset 0 0 0 0.5px #fafafa;"></div>
<svg style="left:1400px;top:779.6px" width="10" height="10" viewBox="0 0 10 10"><path d="M2.2,5.2 L4.1,7.6 L7.9,2.1" stroke="#2e2e2e" stroke-width="1.9" fill="none" stroke-linecap="round" stroke-linejoin="round"/></svg>
<div style="left:1426px;top:779.6px;width:10px;height:10px;box-sizing:border-box;border:1px solid #b3b3b3;border-radius:2px;background:linear-gradient(#e9e9e9,#dedede);box-shadow:inset 0 0 0 0.5px #fafafa;"></div>
<svg style="left:1426px;top:779.6px" width="10" height="10" viewBox="0 0 10 10"><path d="M2.2,5.2 L4.1,7.6 L7.9,2.1" stroke="#2e2e2e" stroke-width="1.9" fill="none" stroke-linecap="round" stroke-linejoin="round"/></svg>
<div style="left:1452px;top:779.6px;width:10px;height:10px;box-sizing:border-box;border:1px solid #b3b3b3;border-radius:2px;background:linear-gradient(#e9e9e9,#dedede);box-shadow:inset 0 0 0 0.5px #fafafa;"></div>
<div style="left:1474px;top:777px;width:33px;height:16px;box-sizing:border-box;background:#f4f4f4;border-top:1px solid #8a8a8a;border-left:1px solid #8a8a8a;border-right:1px solid #e0e0e0;border-bottom:1px solid #e0e0e0;"></div>
<div style="left:1475.80px;top:781.35px;font-size:10.10px;line-height:10.10px;font-weight:400;color:#000000;font-family:'Liberation Sans',sans-serif;white-space:pre;letter-spacing:0.466px;">80</div>
<svg style="left:1523px;top:778.6px" width="14" height="14" viewBox="0 0 14 14"><defs><radialGradient id="mg" cx=".4" cy=".35" r=".7"><stop offset="0" stop-color="#ffffff"/><stop offset=".55" stop-color="#cfe2f6"/><stop offset="1" stop-color="#8ab0dc"/></radialGradient></defs><circle cx="5.2" cy="5.2" r="4.3" fill="url(#mg)" stroke="#7fa0c8" stroke-width=".8"/><path d="M8.3,8.3 L12.3,12.3" stroke="#c8a060" stroke-width="2.4" stroke-linecap="round"/></svg>
<div style="left:453px;top:815px;width:1097px;height:1px;background:#a9a9a9;"></div>
<div style="left:457.40px;top:802.35px;font-size:10.10px;line-height:10.10px;font-weight:400;color:#000000;font-family:'Liberation Sans',sans-serif;white-space:pre;letter-spacing:0.139px;">UNITED STATES CUSTOMS DISTRICT</div>
<div style="left:1360.70px;top:802.35px;font-size:10.10px;line-height:10.10px;font-weight:400;color:#000000;font-family:'Liberation Sans',sans-serif;white-space:pre;letter-spacing:0.359px;">Lov</div>
<div style="left:1400px;top:800.6px;width:10px;height:10px;box-sizing:border-box;border:1px solid #b3b3b3;border-radius:2px;background:linear-gradient(#e9e9e9,#dedede);box-shadow:inset 0 0 0 0.5px #fafafa;"></div>
<svg style="left:1400px;top:800.6px" width="10" height="10" viewBox="0 0 10 10"><path d="M2.2,5.2 L4.1,7.6 L7.9,2.1" stroke="#2e2e2e" stroke-width="1.9" fill="none" stroke-linecap="round" stroke-linejoin="round"/></svg>
<div style="left:1426px;top:800.6px;width:10px;height:10px;box-sizing:border-box;border:1px solid #b3b3b3;border-radius:2px;background:linear-gradient(#e9e9e9,#dedede);box-shadow:inset 0 0 0 0.5px #fafafa;"></div>
<svg style="left:1426px;top:800.6px" width="10" height="10" viewBox="0 0 10 10"><path d="M2.2,5.2 L4.1,7.6 L7.9,2.1" stroke="#2e2e2e" stroke-width="1.9" fill="none" stroke-linecap="round" stroke-linejoin="round"/></svg>
<div style="left:1452px;top:800.6px;width:10px;height:10px;box-sizing:border-box;border:1px solid #b3b3b3;border-radius:2px;background:linear-gradient(#e9e9e9,#dedede);box-shadow:inset 0 0 0 0.5px #fafafa;"></div>
<div style="left:1474px;top:798px;width:33px;height:16px;box-sizing:border-box;background:#f4f4f4;border-top:1px solid #8a8a8a;border-left:1px solid #8a8a8a;border-right:1px solid #e0e0e0;border-bottom:1px solid #e0e0e0;"></div>
<div style="left:1475.80px;top:802.35px;font-size:10.10px;line-height:10.10px;font-weight:400;color:#000000;font-family:'Liberation Sans',sans-serif;white-space:pre;letter-spacing:0.466px;">90</div>
<svg style="left:1523px;top:799.6px" width="14" height="14" viewBox="0 0 14 14"><defs><radialGradient id="mg" cx=".4" cy=".35" r=".7"><stop offset="0" stop-color="#ffffff"/><stop offset=".55" stop-color="#cfe2f6"/><stop offset="1" stop-color="#8ab0dc"/></radialGradient></defs><circle cx="5.2" cy="5.2" r="4.3" fill="url(#mg)" stroke="#7fa0c8" stroke-width=".8"/><path d="M8.3,8.3 L12.3,12.3" stroke="#c8a060" stroke-width="2.4" stroke-linecap="round"/></svg>
<div style="left:453px;top:836px;width:1097px;height:1px;background:#a9a9a9;"></div>
<div style="left:457.40px;top:823.35px;font-size:10.10px;line-height:10.10px;font-weight:400;color:#000000;font-family:'Liberation Sans',sans-serif;white-space:pre;letter-spacing:0.208px;">Cell Phone of Record</div>
<div style="left:1360.85px;top:823.35px;font-size:10.10px;line-height:10.10px;font-weight:400;color:#000000;font-family:'Liberation Sans',sans-serif;white-space:pre;letter-spacing:0.772px;">Set</div>
<div style="left:1400px;top:821.6px;width:10px;height:10px;box-sizing:border-box;border:1px solid #b3b3b3;border-radius:2px;background:linear-gradient(#e9e9e9,#dedede);box-shadow:inset 0 0 0 0.5px #fafafa;"></div>
<div style="left:1426px;top:821.6px;width:10px;height:10px;box-sizing:border-box;border:1px solid #b3b3b3;border-radius:2px;background:linear-gradient(#e9e9e9,#dedede);box-shadow:inset 0 0 0 0.5px #fafafa;"></div>
<div style="left:1452px;top:821.6px;width:10px;height:10px;box-sizing:border-box;border:1px solid #b3b3b3;border-radius:2px;background:linear-gradient(#e9e9e9,#dedede);box-shadow:inset 0 0 0 0.5px #fafafa;"></div>
<div style="left:1474px;top:819px;width:33px;height:16px;box-sizing:border-box;background:#f4f4f4;border-top:1px solid #8a8a8a;border-left:1px solid #8a8a8a;border-right:1px solid #e0e0e0;border-bottom:1px solid #e0e0e0;"></div>
<svg style="left:1523px;top:820.6px" width="14" height="14" viewBox="0 0 14 14"><defs><radialGradient id="mg" cx=".4" cy=".35" r=".7"><stop offset="0" stop-color="#ffffff"/><stop offset=".55" stop-color="#cfe2f6"/><stop offset="1" stop-color="#8ab0dc"/></radialGradient></defs><circle cx="5.2" cy="5.2" r="4.3" fill="url(#mg)" stroke="#7fa0c8" stroke-width=".8"/><path d="M8.3,8.3 L12.3,12.3" stroke="#c8a060" stroke-width="2.4" stroke-linecap="round"/></svg>
<div style="left:453px;top:857px;width:1097px;height:1px;background:#a9a9a9;"></div>
<div style="left:457.40px;top:844.35px;font-size:10.10px;line-height:10.10px;font-weight:400;color:#000000;font-family:'Liberation Sans',sans-serif;white-space:pre;letter-spacing:0.012px;">FOREIGN ADDRESS OF RECORD</div>
<div style="left:1360.85px;top:844.35px;font-size:10.10px;line-height:10.10px;font-weight:400;color:#000000;font-family:'Liberation Sans',sans-serif;white-space:pre;letter-spacing:0.772px;">Set</div>
<div style="left:1400px;top:842.6px;width:10px;height:10px;box-sizing:border-box;border:1px solid #b3b3b3;border-radius:2px;background:linear-gradient(#e9e9e9,#dedede);box-shadow:inset 0 0 0 0.5px #fafafa;"></div>
<div style="left:1426px;top:842.6px;width:10px;height:10px;box-sizing:border-box;border:1px solid #b3b3b3;border-radius:2px;background:linear-gradient(#e9e9e9,#dedede);box-shadow:inset 0 0 0 0.5px #fafafa;"></div>
<div style="left:1452px;top:842.6px;width:10px;height:10px;box-sizing:border-box;border:1px solid #b3b3b3;border-radius:2px;background:linear-gradient(#e9e9e9,#dedede);box-shadow:inset 0 0 0 0.5px #fafafa;"></div>
<div style="left:1474px;top:840px;width:33px;height:16px;box-sizing:border-box;background:#f4f4f4;border-top:1px solid #8a8a8a;border-left:1px solid #8a8a8a;border-right:1px solid #e0e0e0;border-bottom:1px solid #e0e0e0;"></div>
<svg style="left:1523px;top:841.6px" width="14" height="14" viewBox="0 0 14 14"><defs><radialGradient id="mg" cx=".4" cy=".35" r=".7"><stop offset="0" stop-color="#ffffff"/><stop offset=".55" stop-color="#cfe2f6"/><stop offset="1" stop-color="#8ab0dc"/></radialGradient></defs><circle cx="5.2" cy="5.2" r="4.3" fill="url(#mg)" stroke="#7fa0c8" stroke-width=".8"/><path d="M8.3,8.3 L12.3,12.3" stroke="#c8a060" stroke-width="2.4" stroke-linecap="round"/></svg>
<div style="left:453px;top:878px;width:1097px;height:1px;background:#a9a9a9;"></div>
<div style="left:457.40px;top:865.35px;font-size:10.10px;line-height:10.10px;font-weight:400;color:#000000;font-family:'Liberation Sans',sans-serif;white-space:pre;letter-spacing:0.233px;">Fax of Record</div>
<div style="left:1360.85px;top:865.35px;font-size:10.10px;line-height:10.10px;font-weight:400;color:#000000;font-family:'Liberation Sans',sans-serif;white-space:pre;letter-spacing:0.772px;">Set</div>
<div style="left:1400px;top:863.6px;width:10px;height:10px;box-sizing:border-box;border:1px solid #b3b3b3;border-radius:2px;background:linear-gradient(#e9e9e9,#dedede);box-shadow:inset 0 0 0 0.5px #fafafa;"></div>
<div style="left:1426px;top:863.6px;width:10px;height:10px;box-sizing:border-box;border:1px solid #b3b3b3;border-radius:2px;background:linear-gradient(#e9e9e9,#dedede);box-shadow:inset 0 0 0 0.5px #fafafa;"></div>
<div style="left:1452px;top:863.6px;width:10px;height:10px;box-sizing:border-box;border:1px solid #b3b3b3;border-radius:2px;background:linear-gradient(#e9e9e9,#dedede);box-shadow:inset 0 0 0 0.5px #fafafa;"></div>
<div style="left:1474px;top:861px;width:33px;height:16px;box-sizing:border-box;background:#f4f4f4;border-top:1px solid #8a8a8a;border-left:1px solid #8a8a8a;border-right:1px solid #e0e0e0;border-bottom:1px solid #e0e0e0;"></div>
<svg style="left:1523px;top:862.6px" width="14" height="14" viewBox="0 0 14 14"><defs><radialGradient id="mg" cx=".4" cy=".35" r=".7"><stop offset="0" stop-color="#ffffff"/><stop offset=".55" stop-color="#cfe2f6"/><stop offset="1" stop-color="#8ab0dc"/></radialGradient></defs><circle cx="5.2" cy="5.2" r="4.3" fill="url(#mg)" stroke="#7fa0c8" stroke-width=".8"/><path d="M8.3,8.3 L12.3,12.3" stroke="#c8a060" stroke-width="2.4" stroke-linecap="round"/></svg>
<div style="left:453px;top:899px;width:1097px;height:1px;background:#a9a9a9;"></div>
<div style="left:457.40px;top:886.35px;font-size:10.10px;line-height:10.10px;font-weight:400;color:#000000;font-family:'Liberation Sans',sans-serif;white-space:pre;letter-spacing:0.427px;">Temporary Business Mailing Address</div>
<div style="left:1360.85px;top:886.35px;font-size:10.10px;line-height:10.10px;font-weight:400;color:#000000;font-family:'Liberation Sans',sans-serif;white-space:pre;letter-spacing:0.772px;">Set</div>
<div style="left:1400px;top:884.6px;width:10px;height:10px;box-sizing:border-box;border:1px solid #b3b3b3;border-radius:2px;background:linear-gradient(#e9e9e9,#dedede);box-shadow:inset 0 0 0 0.5px #fafafa;"></div>
<div style="left:1426px;top:884.6px;width:10px;height:10px;box-sizing:border-box;border:1px solid #b3b3b3;border-radius:2px;background:linear-gradient(#e9e9e9,#dedede);box-shadow:inset 0 0 0 0.5px #fafafa;"></div>
<div style="left:1452px;top:884.6px;width:10px;height:10px;box-sizing:border-box;border:1px solid #b3b3b3;border-radius:2px;background:linear-gradient(#e9e9e9,#dedede);box-shadow:inset 0 0 0 0.5px #fafafa;"></div>
<div style="left:1474px;top:882px;width:33px;height:16px;box-sizing:border-box;background:#f4f4f4;border-top:1px solid #8a8a8a;border-left:1px solid #8a8a8a;border-right:1px solid #e0e0e0;border-bottom:1px solid #e0e0e0;"></div>
<svg style="left:1523px;top:883.6px" width="14" height="14" viewBox="0 0 14 14"><defs><radialGradient id="mg" cx=".4" cy=".35" r=".7"><stop offset="0" stop-color="#ffffff"/><stop offset=".55" stop-color="#cfe2f6"/><stop offset="1" stop-color="#8ab0dc"/></radialGradient></defs><circle cx="5.2" cy="5.2" r="4.3" fill="url(#mg)" stroke="#7fa0c8" stroke-width=".8"/><path d="M8.3,8.3 L12.3,12.3" stroke="#c8a060" stroke-width="2.4" stroke-linecap="round"/></svg>
<div style="left:453px;top:920px;width:1097px;height:1px;background:#a9a9a9;"></div>
<div style="left:457.40px;top:907.35px;font-size:10.10px;line-height:10.10px;font-weight:400;color:#000000;font-family:'Liberation Sans',sans-serif;white-space:pre;letter-spacing:0.586px;">Temporary/Alternate Address</div>
<div style="left:1360.85px;top:907.35px;font-size:10.10px;line-height:10.10px;font-weight:400;color:#000000;font-family:'Liberation Sans',sans-serif;white-space:pre;letter-spacing:0.772px;">Set</div>
<div style="left:1400px;top:905.6px;width:10px;height:10px;box-sizing:border-box;border:1px solid #b3b3b3;border-radius:2px;background:linear-gradient(#e9e9e9,#dedede);box-shadow:inset 0 0 0 0.5px #fafafa;"></div>
<div style="left:1426px;top:905.6px;width:10px;height:10px;box-sizing:border-box;border:1px solid #b3b3b3;border-radius:2px;background:linear-gradient(#e9e9e9,#dedede);box-shadow:inset 0 0 0 0.5px #fafafa;"></div>
<div style="left:1452px;top:905.6px;width:10px;height:10px;box-sizing:border-box;border:1px solid #b3b3b3;border-radius:2px;background:linear-gradient(#e9e9e9,#dedede);box-shadow:inset 0 0 0 0.5px #fafafa;"></div>
<div style="left:1474px;top:903px;width:33px;height:16px;box-sizing:border-box;background:#f4f4f4;border-top:1px solid #8a8a8a;border-left:1px solid #8a8a8a;border-right:1px solid #e0e0e0;border-bottom:1px solid #e0e0e0;"></div>
<svg style="left:1523px;top:904.6px" width="14" height="14" viewBox="0 0 14 14"><defs><radialGradient id="mg" cx=".4" cy=".35" r=".7"><stop offset="0" stop-color="#ffffff"/><stop offset=".55" stop-color="#cfe2f6"/><stop offset="1" stop-color="#8ab0dc"/></radialGradient></defs><circle cx="5.2" cy="5.2" r="4.3" fill="url(#mg)" stroke="#7fa0c8" stroke-width=".8"/><path d="M8.3,8.3 L12.3,12.3" stroke="#c8a060" stroke-width="2.4" stroke-linecap="round"/></svg>
<div style="left:453px;top:941px;width:1097px;height:1px;background:#a9a9a9;"></div>
<div style="left:457.40px;top:928.35px;font-size:10.10px;line-height:10.10px;font-weight:400;color:#000000;font-family:'Liberation Sans',sans-serif;white-space:pre;letter-spacing:0.608px;">Temporary/Alternate Fax</div>
<div style="left:1360.85px;top:928.35px;font-size:10.10px;line-height:10.10px;font-weight:400;color:#000000;font-family:'Liberation Sans',sans-serif;white-space:pre;letter-spacing:0.772px;">Set</div>
<div style="left:1400px;top:926.6px;width:10px;height:10px;box-sizing:border-box;border:1px solid #b3b3b3;border-radius:2px;background:linear-gradient(#e9e9e9,#dedede);box-shadow:inset 0 0 0 0.5px #fafafa;"></div>
<div style="left:1426px;top:926.6px;width:10px;height:10px;box-sizing:border-box;border:1px solid #b3b3b3;border-radius:2px;background:linear-gradient(#e9e9e9,#dedede);box-shadow:inset 0 0 0 0.5px #fafafa;"></div>
<div style="left:1452px;top:926.6px;width:10px;height:10px;box-sizing:border-box;border:1px solid #b3b3b3;border-radius:2px;background:linear-gradient(#e9e9e9,#dedede);box-shadow:inset 0 0 0 0.5px #fafafa;"></div>
<div style="left:1474px;top:924px;width:33px;height:16px;box-sizing:border-box;background:#f4f4f4;border-top:1px solid #8a8a8a;border-left:1px solid #8a8a8a;border-right:1px solid #e0e0e0;border-bottom:1px solid #e0e0e0;"></div>
<svg style="left:1523px;top:925.6px" width="14" height="14" viewBox="0 0 14 14"><defs><radialGradient id="mg" cx=".4" cy=".35" r=".7"><stop offset="0" stop-color="#ffffff"/><stop offset=".55" stop-color="#cfe2f6"/><stop offset="1" stop-color="#8ab0dc"/></radialGradient></defs><circle cx="5.2" cy="5.2" r="4.3" fill="url(#mg)" stroke="#7fa0c8" stroke-width=".8"/><path d="M8.3,8.3 L12.3,12.3" stroke="#c8a060" stroke-width="2.4" stroke-linecap="round"/></svg>
<div style="left:453px;top:962px;width:1097px;height:1px;background:#a9a9a9;"></div>
<div style="left:457.40px;top:949.35px;font-size:10.10px;line-height:10.10px;font-weight:400;color:#000000;font-family:'Liberation Sans',sans-serif;white-space:pre;letter-spacing:0.555px;">Temporary/Alternate Phone</div>
<div style="left:1360.85px;top:949.35px;font-size:10.10px;line-height:10.10px;font-weight:400;color:#000000;font-family:'Liberation Sans',sans-serif;white-space:pre;letter-spacing:0.772px;">Set</div>
<div style="left:1400px;top:947.6px;width:10px;height:10px;box-sizing:border-box;border:1px solid #b3b3b3;border-radius:2px;background:linear-gradient(#e9e9e9,#dedede);box-shadow:inset 0 0 0 0.5px #fafafa;"></div>
<div style="left:1426px;top:947.6px;width:10px;height:10px;box-sizing:border-box;border:1px solid #b3b3b3;border-radius:2px;background:linear-gradient(#e9e9e9,#dedede);box-shadow:inset 0 0 0 0.5px #fafafa;"></div>
<div style="left:1452px;top:947.6px;width:10px;height:10px;box-sizing:border-box;border:1px solid #b3b3b3;border-radius:2px;background:linear-gradient(#e9e9e9,#dedede);box-shadow:inset 0 0 0 0.5px #fafafa;"></div>
<div style="left:1474px;top:945px;width:33px;height:16px;box-sizing:border-box;background:#f4f4f4;border-top:1px solid #8a8a8a;border-left:1px solid #8a8a8a;border-right:1px solid #e0e0e0;border-bottom:1px solid #e0e0e0;"></div>
<svg style="left:1523px;top:946.6px" width="14" height="14" viewBox="0 0 14 14"><defs><radialGradient id="mg" cx=".4" cy=".35" r=".7"><stop offset="0" stop-color="#ffffff"/><stop offset=".55" stop-color="#cfe2f6"/><stop offset="1" stop-color="#8ab0dc"/></radialGradient></defs><circle cx="5.2" cy="5.2" r="4.3" fill="url(#mg)" stroke="#7fa0c8" stroke-width=".8"/><path d="M8.3,8.3 L12.3,12.3" stroke="#c8a060" stroke-width="2.4" stroke-linecap="round"/></svg>
<div style="left:453px;top:983px;width:1097px;height:1px;background:#a9a9a9;"></div>
<div style="left:457.40px;top:970.35px;font-size:10.10px;line-height:10.10px;font-weight:400;color:#000000;font-family:'Liberation Sans',sans-serif;white-space:pre;letter-spacing:0.572px;">Temporary/Alternate cell phone</div>
<div style="left:1360.85px;top:970.35px;font-size:10.10px;line-height:10.10px;font-weight:400;color:#000000;font-family:'Liberation Sans',sans-serif;white-space:pre;letter-spacing:0.772px;">Set</div>
<div style="left:1400px;top:968.6px;width:10px;height:10px;box-sizing:border-box;border:1px solid #b3b3b3;border-radius:2px;background:linear-gradient(#e9e9e9,#dedede);box-shadow:inset 0 0 0 0.5px #fafafa;"></div>
<div style="left:1426px;top:968.6px;width:10px;height:10px;box-sizing:border-box;border:1px solid #b3b3b3;border-radius:2px;background:linear-gradient(#e9e9e9,#dedede);box-shadow:inset 0 0 0 0.5px #fafafa;"></div>
<div style="left:1452px;top:968.6px;width:10px;height:10px;box-sizing:border-box;border:1px solid #b3b3b3;border-radius:2px;background:linear-gradient(#e9e9e9,#dedede);box-shadow:inset 0 0 0 0.5px #fafafa;"></div>
<div style="left:1474px;top:966px;width:33px;height:16px;box-sizing:border-box;background:#f4f4f4;border-top:1px solid #8a8a8a;border-left:1px solid #8a8a8a;border-right:1px solid #e0e0e0;border-bottom:1px solid #e0e0e0;"></div>
<svg style="left:1523px;top:967.6px" width="14" height="14" viewBox="0 0 14 14"><defs><radialGradient id="mg" cx=".4" cy=".35" r=".7"><stop offset="0" stop-color="#ffffff"/><stop offset=".55" stop-color="#cfe2f6"/><stop offset="1" stop-color="#8ab0dc"/></radialGradient></defs><circle cx="5.2" cy="5.2" r="4.3" fill="url(#mg)" stroke="#7fa0c8" stroke-width=".8"/><path d="M8.3,8.3 L12.3,12.3" stroke="#c8a060" stroke-width="2.4" stroke-linecap="round"/></svg>
<div style="left:453px;top:1004px;width:1097px;height:1px;background:#a9a9a9;"></div>
<div style="left:457.40px;top:991.35px;font-size:10.10px;line-height:10.10px;font-weight:400;color:#000000;font-family:'Liberation Sans',sans-serif;white-space:pre;letter-spacing:0.436px;">Articles of Incorporation on File</div>
<div style="left:1360.70px;top:991.35px;font-size:10.10px;line-height:10.10px;font-weight:400;color:#000000;font-family:'Liberation Sans',sans-serif;white-space:pre;letter-spacing:0.359px;">Lov</div>
<div style="left:1400px;top:989.6px;width:10px;height:10px;box-sizing:border-box;border:1px solid #b3b3b3;border-radius:2px;background:linear-gradient(#e9e9e9,#dedede);box-shadow:inset 0 0 0 0.5px #fafafa;"></div>
<div style="left:1426px;top:989.6px;width:10px;height:10px;box-sizing:border-box;border:1px solid #b3b3b3;border-radius:2px;background:linear-gradient(#e9e9e9,#dedede);box-shadow:inset 0 0 0 0.5px #fafafa;"></div>
<div style="left:1452px;top:989.6px;width:10px;height:10px;box-sizing:border-box;border:1px solid #b3b3b3;border-radius:2px;background:linear-gradient(#e9e9e9,#dedede);box-shadow:inset 0 0 0 0.5px #fafafa;"></div>
<div style="left:1474px;top:987px;width:33px;height:16px;box-sizing:border-box;background:#f4f4f4;border-top:1px solid #8a8a8a;border-left:1px solid #8a8a8a;border-right:1px solid #e0e0e0;border-bottom:1px solid #e0e0e0;"></div>
<svg style="left:1523px;top:988.6px" width="14" height="14" viewBox="0 0 14 14"><defs><radialGradient id="mg" cx=".4" cy=".35" r=".7"><stop offset="0" stop-color="#ffffff"/><stop offset=".55" stop-color="#cfe2f6"/><stop offset="1" stop-color="#8ab0dc"/></radialGradient></defs><circle cx="5.2" cy="5.2" r="4.3" fill="url(#mg)" stroke="#7fa0c8" stroke-width=".8"/><path d="M8.3,8.3 L12.3,12.3" stroke="#c8a060" stroke-width="2.4" stroke-linecap="round"/></svg>
<div style="left:453px;top:1025px;width:1097px;height:1px;background:#a9a9a9;"></div>
<div style="left:457.40px;top:1012.35px;font-size:10.10px;line-height:10.10px;font-weight:400;color:#000000;font-family:'Liberation Sans',sans-serif;white-space:pre;letter-spacing:0.119px;">BUSINESS ORGANIZATION TYPE</div>
<div style="left:1360.70px;top:1012.35px;font-size:10.10px;line-height:10.10px;font-weight:400;color:#000000;font-family:'Liberation Sans',sans-serif;white-space:pre;letter-spacing:0.359px;">Lov</div>
<div style="left:1400px;top:1010.6px;width:10px;height:10px;box-sizing:border-box;border:1px solid #b3b3b3;border-radius:2px;background:linear-gradient(#e9e9e9,#dedede);box-shadow:inset 0 0 0 0.5px #fafafa;"></div>
<div style="left:1426px;top:1010.6px;width:10px;height:10px;box-sizing:border-box;border:1px solid #b3b3b3;border-radius:2px;background:linear-gradient(#e9e9e9,#dedede);box-shadow:inset 0 0 0 0.5px #fafafa;"></div>
<div style="left:1452px;top:1010.6px;width:10px;height:10px;box-sizing:border-box;border:1px solid #b3b3b3;border-radius:2px;background:linear-gradient(#e9e9e9,#dedede);box-shadow:inset 0 0 0 0.5px #fafafa;"></div>
<div style="left:1474px;top:1008px;width:33px;height:16px;box-sizing:border-box;background:#f4f4f4;border-top:1px solid #8a8a8a;border-left:1px solid #8a8a8a;border-right:1px solid #e0e0e0;border-bottom:1px solid #e0e0e0;"></div>
<svg style="left:1523px;top:1009.6px" width="14" height="14" viewBox="0 0 14 14"><defs><radialGradient id="mg" cx=".4" cy=".35" r=".7"><stop offset="0" stop-color="#ffffff"/><stop offset=".55" stop-color="#cfe2f6"/><stop offset="1" stop-color="#8ab0dc"/></radialGradient></defs><circle cx="5.2" cy="5.2" r="4.3" fill="url(#mg)" stroke="#7fa0c8" stroke-width=".8"/><path d="M8.3,8.3 L12.3,12.3" stroke="#c8a060" stroke-width="2.4" stroke-linecap="round"/></svg>
<div style="left:453px;top:1046px;width:1097px;height:1px;background:#a9a9a9;"></div>
<div style="left:457.40px;top:1033.35px;font-size:10.10px;line-height:10.10px;font-weight:400;color:#000000;font-family:'Liberation Sans',sans-serif;white-space:pre;letter-spacing:-0.051px;">BUSINESS OWNER NAME</div>
<div style="left:1358.05px;top:1033.35px;font-size:10.10px;line-height:10.10px;font-weight:400;color:#000000;font-family:'Liberation Sans',sans-serif;white-space:pre;letter-spacing:1.261px;">Text</div>
<div style="left:1400px;top:1031.6px;width:10px;height:10px;box-sizing:border-box;border:1px solid #b3b3b3;border-radius:2px;background:linear-gradient(#e9e9e9,#dedede);box-shadow:inset 0 0 0 0.5px #fafafa;"></div>
<div style="left:1426px;top:1031.6px;width:10px;height:10px;box-sizing:border-box;border:1px solid #b3b3b3;border-radius:2px;background:linear-gradient(#e9e9e9,#dedede);box-shadow:inset 0 0 0 0.5px #fafafa;"></div>
<div style="left:1452px;top:1031.6px;width:10px;height:10px;box-sizing:border-box;border:1px solid #b3b3b3;border-radius:2px;background:linear-gradient(#e9e9e9,#dedede);box-shadow:inset 0 0 0 0.5px #fafafa;"></div>
<div style="left:1474px;top:1029px;width:33px;height:16px;box-sizing:border-box;background:#f4f4f4;border-top:1px solid #8a8a8a;border-left:1px solid #8a8a8a;border-right:1px solid #e0e0e0;border-bottom:1px solid #e0e0e0;"></div>
<svg style="left:1523px;top:1030.6px" width="14" height="14" viewBox="0 0 14 14"><defs><radialGradient id="mg" cx=".4" cy=".35" r=".7"><stop offset="0" stop-color="#ffffff"/><stop offset=".55" stop-color="#cfe2f6"/><stop offset="1" stop-color="#8ab0dc"/></radialGradient></defs><circle cx="5.2" cy="5.2" r="4.3" fill="url(#mg)" stroke="#7fa0c8" stroke-width=".8"/><path d="M8.3,8.3 L12.3,12.3" stroke="#c8a060" stroke-width="2.4" stroke-linecap="round"/></svg>
<div style="left:453px;top:1067px;width:1097px;height:1px;background:#a9a9a9;"></div>
<div style="left:457.40px;top:1054.35px;font-size:10.10px;line-height:10.10px;font-weight:400;color:#000000;font-family:'Liberation Sans',sans-serif;white-space:pre;letter-spacing:0.431px;">Business Related Comments</div>
<div style="left:1358.05px;top:1054.35px;font-size:10.10px;line-height:10.10px;font-weight:400;color:#000000;font-family:'Liberation Sans',sans-serif;white-space:pre;letter-spacing:1.261px;">Text</div>
<div style="left:1400px;top:1052.6px;width:10px;height:10px;box-sizing:border-box;border:1px solid #b3b3b3;border-radius:2px;background:linear-gradient(#e9e9e9,#dedede);box-shadow:inset 0 0 0 0.5px #fafafa;"></div>
<div style="left:1426px;top:1052.6px;width:10px;height:10px;box-sizing:border-box;border:1px solid #b3b3b3;border-radius:2px;background:linear-gradient(#e9e9e9,#dedede);box-shadow:inset 0 0 0 0.5px #fafafa;"></div>
<div style="left:1452px;top:1052.6px;width:10px;height:10px;box-sizing:border-box;border:1px solid #b3b3b3;border-radius:2px;background:linear-gradient(#e9e9e9,#dedede);box-shadow:inset 0 0 0 0.5px #fafafa;"></div>
<div style="left:1474px;top:1050px;width:33px;height:16px;box-sizing:border-box;background:#f4f4f4;border-top:1px solid #8a8a8a;border-left:1px solid #8a8a8a;border-right:1px solid #e0e0e0;border-bottom:1px solid #e0e0e0;"></div>
<svg style="left:1523px;top:1051.6px" width="14" height="14" viewBox="0 0 14 14"><defs><radialGradient id="mg" cx=".4" cy=".35" r=".7"><stop offset="0" stop-color="#ffffff"/><stop offset=".55" stop-color="#cfe2f6"/><stop offset="1" stop-color="#8ab0dc"/></radialGradient></defs><circle cx="5.2" cy="5.2" r="4.3" fill="url(#mg)" stroke="#7fa0c8" stroke-width=".8"/><path d="M8.3,8.3 L12.3,12.3" stroke="#c8a060" stroke-width="2.4" stroke-linecap="round"/></svg>
<div style="left:453px;top:1088px;width:1097px;height:1px;background:#a9a9a9;"></div>
<div style="left:457.40px;top:1075.35px;font-size:10.10px;line-height:10.10px;font-weight:400;color:#000000;font-family:'Liberation Sans',sans-serif;white-space:pre;letter-spacing:0.388px;">Business e-mail address</div>
<div style="left:1358.05px;top:1075.35px;font-size:10.10px;line-height:10.10px;font-weight:400;color:#000000;font-family:'Liberation Sans',sans-serif;white-space:pre;letter-spacing:1.261px;">Text</div>
<div style="left:1400px;top:1073.6px;width:10px;height:10px;box-sizing:border-box;border:1px solid #b3b3b3;border-radius:2px;background:linear-gradient(#e9e9e9,#dedede);box-shadow:inset 0 0 0 0.5px #fafafa;"></div>
<div style="left:1426px;top:1073.6px;width:10px;height:10px;box-sizing:border-box;border:1px solid #b3b3b3;border-radius:2px;background:linear-gradient(#e9e9e9,#dedede);box-shadow:inset 0 0 0 0.5px #fafafa;"></div>
<div style="left:1452px;top:1073.6px;width:10px;height:10px;box-sizing:border-box;border:1px solid #b3b3b3;border-radius:2px;background:linear-gradient(#e9e9e9,#dedede);box-shadow:inset 0 0 0 0.5px #fafafa;"></div>
<div style="left:1474px;top:1071px;width:33px;height:16px;box-sizing:border-box;background:#f4f4f4;border-top:1px solid #8a8a8a;border-left:1px solid #8a8a8a;border-right:1px solid #e0e0e0;border-bottom:1px solid #e0e0e0;"></div>
<svg style="left:1523px;top:1072.6px" width="14" height="14" viewBox="0 0 14 14"><defs><radialGradient id="mg" cx=".4" cy=".35" r=".7"><stop offset="0" stop-color="#ffffff"/><stop offset=".55" stop-color="#cfe2f6"/><stop offset="1" stop-color="#8ab0dc"/></radialGradient></defs><circle cx="5.2" cy="5.2" r="4.3" fill="url(#mg)" stroke="#7fa0c8" stroke-width=".8"/><path d="M8.3,8.3 L12.3,12.3" stroke="#c8a060" stroke-width="2.4" stroke-linecap="round"/></svg>
<div style="left:453px;top:1109px;width:1097px;height:1px;background:#a9a9a9;"></div>
<div style="left:457.40px;top:1096.35px;font-size:10.10px;line-height:10.10px;font-weight:400;color:#000000;font-family:'Liberation Sans',sans-serif;white-space:pre;letter-spacing:-0.036px;">CONTACT PERSON TITLE</div>
<div style="left:1360.70px;top:1096.35px;font-size:10.10px;line-height:10.10px;font-weight:400;color:#000000;font-family:'Liberation Sans',sans-serif;white-space:pre;letter-spacing:0.359px;">Lov</div>
<div style="left:1400px;top:1094.6px;width:10px;height:10px;box-sizing:border-box;border:1px solid #b3b3b3;border-radius:2px;background:linear-gradient(#e9e9e9,#dedede);box-shadow:inset 0 0 0 0.5px #fafafa;"></div>
<div style="left:1426px;top:1094.6px;width:10px;height:10px;box-sizing:border-box;border:1px solid #b3b3b3;border-radius:2px;background:linear-gradient(#e9e9e9,#dedede);box-shadow:inset 0 0 0 0.5px #fafafa;"></div>
<div style="left:1452px;top:1094.6px;width:10px;height:10px;box-sizing:border-box;border:1px solid #b3b3b3;border-radius:2px;background:linear-gradient(#e9e9e9,#dedede);box-shadow:inset 0 0 0 0.5px #fafafa;"></div>
<div style="left:1474px;top:1092px;width:33px;height:16px;box-sizing:border-box;background:#f4f4f4;border-top:1px solid #8a8a8a;border-left:1px solid #8a8a8a;border-right:1px solid #e0e0e0;border-bottom:1px solid #e0e0e0;"></div>
<svg style="left:1523px;top:1093.6px" width="14" height="14" viewBox="0 0 14 14"><defs><radialGradient id="mg" cx=".4" cy=".35" r=".7"><stop offset="0" stop-color="#ffffff"/><stop offset=".55" stop-color="#cfe2f6"/><stop offset="1" stop-color="#8ab0dc"/></radialGradient></defs><circle cx="5.2" cy="5.2" r="4.3" fill="url(#mg)" stroke="#7fa0c8" stroke-width=".8"/><path d="M8.3,8.3 L12.3,12.3" stroke="#c8a060" stroke-width="2.4" stroke-linecap="round"/></svg>
<div style="left:453px;top:1130px;width:1097px;height:1px;background:#a9a9a9;"></div>
<div style="left:457.40px;top:1117.35px;font-size:10.10px;line-height:10.10px;font-weight:400;color:#000000;font-family:'Liberation Sans',sans-serif;white-space:pre;letter-spacing:0.433px;">Citizenship</div>
<div style="left:1360.70px;top:1117.35px;font-size:10.10px;line-height:10.10px;font-weight:400;color:#000000;font-family:'Liberation Sans',sans-serif;white-space:pre;letter-spacing:0.359px;">Lov</div>
<div style="left:1400px;top:1115.6px;width:10px;height:10px;box-sizing:border-box;border:1px solid #b3b3b3;border-radius:2px;background:linear-gradient(#e9e9e9,#dedede);box-shadow:inset 0 0 0 0.5px #fafafa;"></div>
<div style="left:1426px;top:1115.6px;width:10px;height:10px;box-sizing:border-box;border:1px solid #b3b3b3;border-radius:2px;background:linear-gradient(#e9e9e9,#dedede);box-shadow:inset 0 0 0 0.5px #fafafa;"></div>
<div style="left:1452px;top:1115.6px;width:10px;height:10px;box-sizing:border-box;border:1px solid #b3b3b3;border-radius:2px;background:linear-gradient(#e9e9e9,#dedede);box-shadow:inset 0 0 0 0.5px #fafafa;"></div>
<div style="left:1474px;top:1113px;width:33px;height:16px;box-sizing:border-box;background:#f4f4f4;border-top:1px solid #8a8a8a;border-left:1px solid #8a8a8a;border-right:1px solid #e0e0e0;border-bottom:1px solid #e0e0e0;"></div>
<svg style="left:1523px;top:1114.6px" width="14" height="14" viewBox="0 0 14 14"><defs><radialGradient id="mg" cx=".4" cy=".35" r=".7"><stop offset="0" stop-color="#ffffff"/><stop offset=".55" stop-color="#cfe2f6"/><stop offset="1" stop-color="#8ab0dc"/></radialGradient></defs><circle cx="5.2" cy="5.2" r="4.3" fill="url(#mg)" stroke="#7fa0c8" stroke-width=".8"/><path d="M8.3,8.3 L12.3,12.3" stroke="#c8a060" stroke-width="2.4" stroke-linecap="round"/></svg>
<div style="left:453px;top:1151px;width:1097px;height:1px;background:#a9a9a9;"></div>
<div style="left:457.40px;top:1138.35px;font-size:10.10px;line-height:10.10px;font-weight:400;color:#000000;font-family:'Liberation Sans',sans-serif;white-space:pre;letter-spacing:0.292px;">Contact Person Role</div>
<div style="left:1358.05px;top:1138.35px;font-size:10.10px;line-height:10.10px;font-weight:400;color:#000000;font-family:'Liberation Sans',sans-serif;white-space:pre;letter-spacing:1.261px;">Text</div>
<div style="left:1400px;top:1136.6px;width:10px;height:10px;box-sizing:border-box;border:1px solid #b3b3b3;border-radius:2px;background:linear-gradient(#e9e9e9,#dedede);box-shadow:inset 0 0 0 0.5px #fafafa;"></div>
<div style="left:1426px;top:1136.6px;width:10px;height:10px;box-sizing:border-box;border:1px solid #b3b3b3;border-radius:2px;background:linear-gradient(#e9e9e9,#dedede);box-shadow:inset 0 0 0 0.5px #fafafa;"></div>
<div style="left:1452px;top:1136.6px;width:10px;height:10px;box-sizing:border-box;border:1px solid #b3b3b3;border-radius:2px;background:linear-gradient(#e9e9e9,#dedede);box-shadow:inset 0 0 0 0.5px #fafafa;"></div>
<div style="left:1474px;top:1134px;width:33px;height:16px;box-sizing:border-box;background:#f4f4f4;border-top:1px solid #8a8a8a;border-left:1px solid #8a8a8a;border-right:1px solid #e0e0e0;border-bottom:1px solid #e0e0e0;"></div>
<svg style="left:1523px;top:1135.6px" width="14" height="14" viewBox="0 0 14 14"><defs><radialGradient id="mg" cx=".4" cy=".35" r=".7"><stop offset="0" stop-color="#ffffff"/><stop offset=".55" stop-color="#cfe2f6"/><stop offset="1" stop-color="#8ab0dc"/></radialGradient></defs><circle cx="5.2" cy="5.2" r="4.3" fill="url(#mg)" stroke="#7fa0c8" stroke-width=".8"/><path d="M8.3,8.3 L12.3,12.3" stroke="#c8a060" stroke-width="2.4" stroke-linecap="round"/></svg>
<div style="left:453px;top:1172px;width:1097px;height:1px;background:#a9a9a9;"></div>
<div style="left:457.40px;top:1159.35px;font-size:10.10px;line-height:10.10px;font-weight:400;color:#000000;font-family:'Liberation Sans',sans-serif;white-space:pre;letter-spacing:0.557px;">Data Load Identifier</div>
<div style="left:1349.75px;top:1159.35px;font-size:10.10px;line-height:10.10px;font-weight:400;color:#000000;font-family:'Liberation Sans',sans-serif;white-space:pre;letter-spacing:0.599px;">Number</div>
<div style="left:1400px;top:1157.6px;width:10px;height:10px;box-sizing:border-box;border:1px solid #b3b3b3;border-radius:2px;background:linear-gradient(#e9e9e9,#dedede);box-shadow:inset 0 0 0 0.5px #fafafa;"></div>
<div style="left:1426px;top:1157.6px;width:10px;height:10px;box-sizing:border-box;border:1px solid #b3b3b3;border-radius:2px;background:linear-gradient(#e9e9e9,#dedede);box-shadow:inset 0 0 0 0.5px #fafafa;"></div>
<div style="left:1452px;top:1157.6px;width:10px;height:10px;box-sizing:border-box;border:1px solid #b3b3b3;border-radius:2px;background:linear-gradient(#e9e9e9,#dedede);box-shadow:inset 0 0 0 0.5px #fafafa;"></div>
<div style="left:1474px;top:1155px;width:33px;height:16px;box-sizing:border-box;background:#f4f4f4;border-top:1px solid #8a8a8a;border-left:1px solid #8a8a8a;border-right:1px solid #e0e0e0;border-bottom:1px solid #e0e0e0;"></div>
<svg style="left:1523px;top:1156.6px" width="14" height="14" viewBox="0 0 14 14"><defs><radialGradient id="mg" cx=".4" cy=".35" r=".7"><stop offset="0" stop-color="#ffffff"/><stop offset=".55" stop-color="#cfe2f6"/><stop offset="1" stop-color="#8ab0dc"/></radialGradient></defs><circle cx="5.2" cy="5.2" r="4.3" fill="url(#mg)" stroke="#7fa0c8" stroke-width=".8"/><path d="M8.3,8.3 L12.3,12.3" stroke="#c8a060" stroke-width="2.4" stroke-linecap="round"/></svg>
<div style="left:453px;top:1193px;width:1097px;height:1px;background:#a9a9a9;"></div>
<div style="left:457.40px;top:1180.35px;font-size:10.10px;line-height:10.10px;font-weight:400;color:#000000;font-family:'Liberation Sans',sans-serif;white-space:pre;letter-spacing:0.070px;">ELIGIBLE OWNER</div>
<div style="left:1360.70px;top:1180.35px;font-size:10.10px;line-height:10.10px;font-weight:400;color:#000000;font-family:'Liberation Sans',sans-serif;white-space:pre;letter-spacing:0.359px;">Lov</div>
<div style="left:1400px;top:1178.6px;width:10px;height:10px;box-sizing:border-box;border:1px solid #b3b3b3;border-radius:2px;background:linear-gradient(#e9e9e9,#dedede);box-shadow:inset 0 0 0 0.5px #fafafa;"></div>
<div style="left:1426px;top:1178.6px;width:10px;height:10px;box-sizing:border-box;border:1px solid #b3b3b3;border-radius:2px;background:linear-gradient(#e9e9e9,#dedede);box-shadow:inset 0 0 0 0.5px #fafafa;"></div>
<div style="left:1452px;top:1178.6px;width:10px;height:10px;box-sizing:border-box;border:1px solid #b3b3b3;border-radius:2px;background:linear-gradient(#e9e9e9,#dedede);box-shadow:inset 0 0 0 0.5px #fafafa;"></div>
<div style="left:1474px;top:1176px;width:33px;height:16px;box-sizing:border-box;background:#f4f4f4;border-top:1px solid #8a8a8a;border-left:1px solid #8a8a8a;border-right:1px solid #e0e0e0;border-bottom:1px solid #e0e0e0;"></div>
<svg style="left:1523px;top:1177.6px" width="14" height="14" viewBox="0 0 14 14"><defs><radialGradient id="mg" cx=".4" cy=".35" r=".7"><stop offset="0" stop-color="#ffffff"/><stop offset=".55" stop-color="#cfe2f6"/><stop offset="1" stop-color="#8ab0dc"/></radialGradient></defs><circle cx="5.2" cy="5.2" r="4.3" fill="url(#mg)" stroke="#7fa0c8" stroke-width=".8"/><path d="M8.3,8.3 L12.3,12.3" stroke="#c8a060" stroke-width="2.4" stroke-linecap="round"/></svg>
<div style="left:1400px;top:1199.6px;width:10px;height:10px;box-sizing:border-box;border:1px solid #b3b3b3;border-radius:2px;background:linear-gradient(#e9e9e9,#dedede);box-shadow:inset 0 0 0 0.5px #fafafa;"></div>
<div style="left:1426px;top:1199.6px;width:10px;height:10px;box-sizing:border-box;border:1px solid #b3b3b3;border-radius:2px;background:linear-gradient(#e9e9e9,#dedede);box-shadow:inset 0 0 0 0.5px #fafafa;"></div>
<div style="left:1452px;top:1199.6px;width:10px;height:10px;box-sizing:border-box;border:1px solid #b3b3b3;border-radius:2px;background:linear-gradient(#e9e9e9,#dedede);box-shadow:inset 0 0 0 0.5px #fafafa;"></div>
<div style="left:1474px;top:1197px;width:33px;height:16px;box-sizing:border-box;background:#f4f4f4;border-top:1px solid #8a8a8a;border-left:1px solid #8a8a8a;border-right:1px solid #e0e0e0;border-bottom:1px solid #e0e0e0;"></div>
<svg style="left:1523px;top:1198.6px" width="14" height="14" viewBox="0 0 14 14"><defs><radialGradient id="mg" cx=".4" cy=".35" r=".7"><stop offset="0" stop-color="#ffffff"/><stop offset=".55" stop-color="#cfe2f6"/><stop offset="1" stop-color="#8ab0dc"/></radialGradient></defs><circle cx="5.2" cy="5.2" r="4.3" fill="url(#mg)" stroke="#7fa0c8" stroke-width=".8"/><path d="M8.3,8.3 L12.3,12.3" stroke="#c8a060" stroke-width="2.4" stroke-linecap="round"/></svg></body></html>
